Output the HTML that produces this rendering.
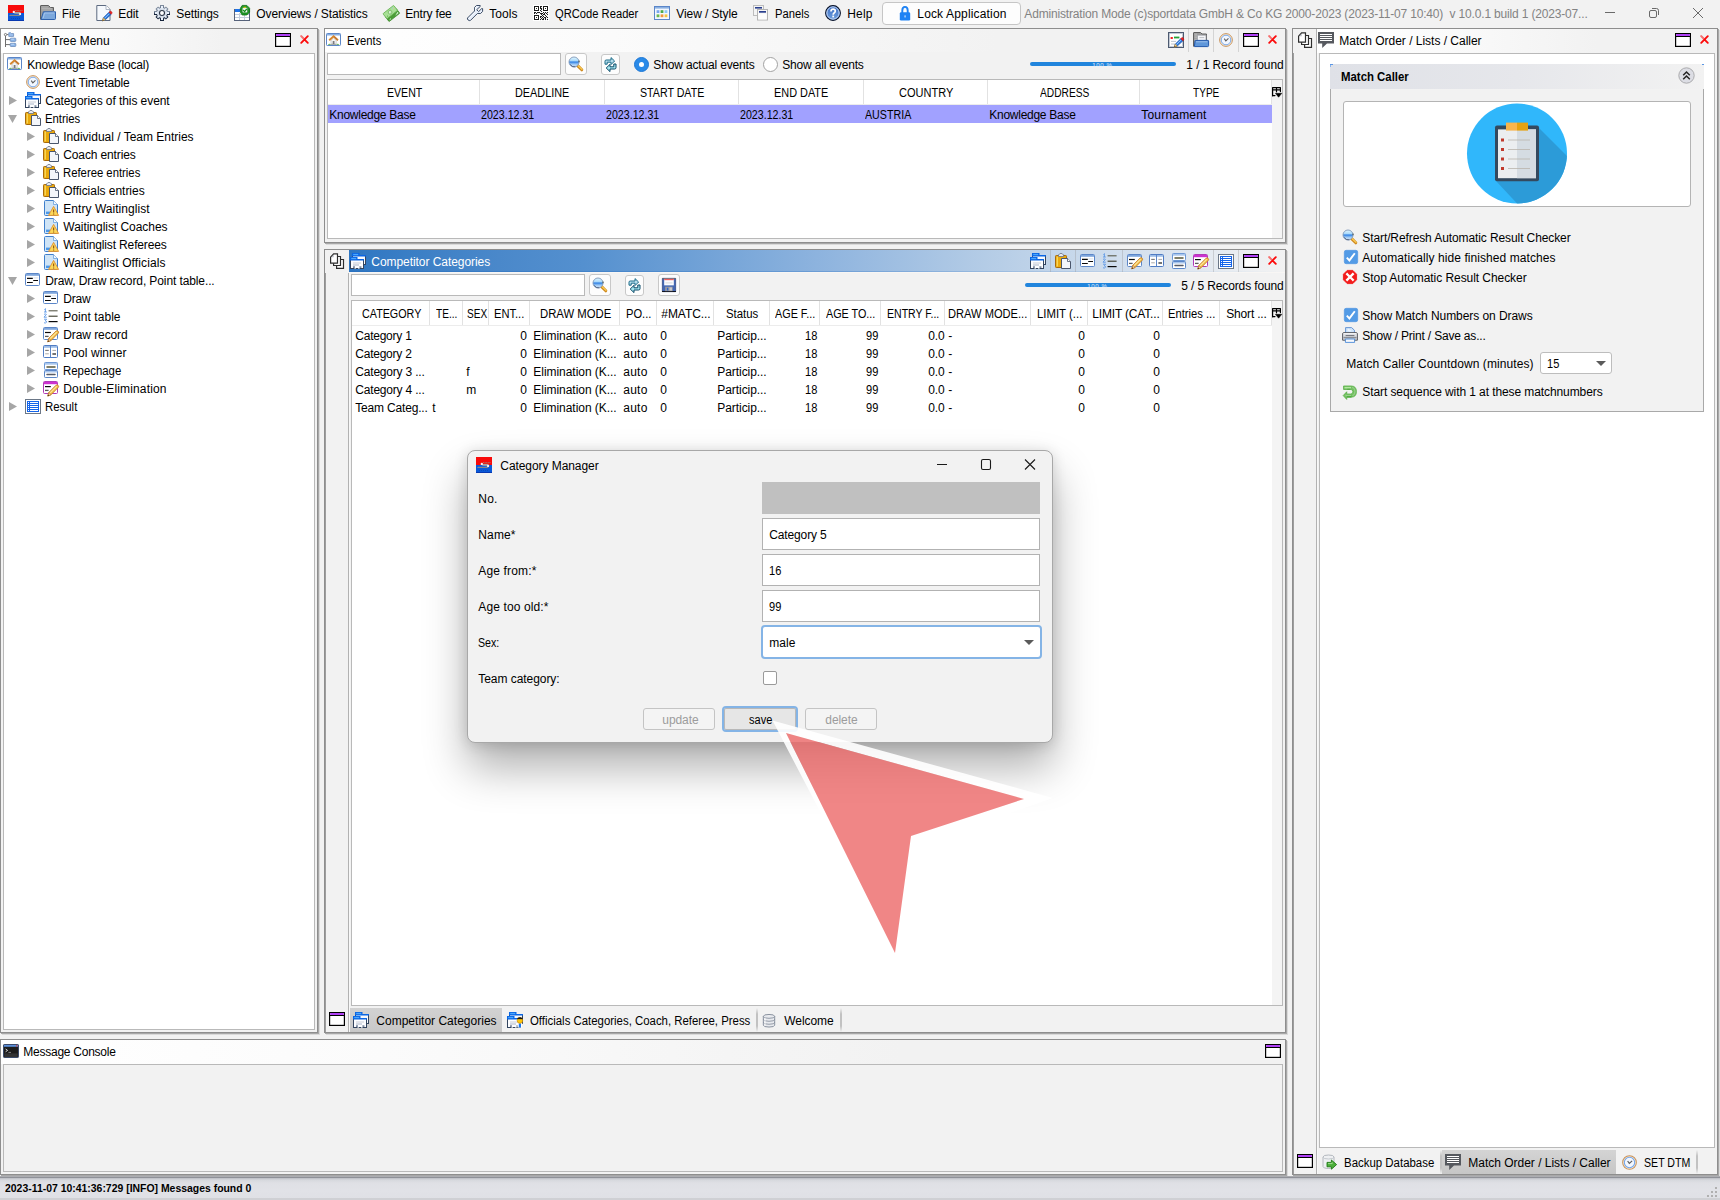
<!DOCTYPE html>
<html lang="en"><head><meta charset="utf-8"><title>Category Manager</title>
<style>
html,body{margin:0;padding:0;}
body{width:1720px;height:1200px;overflow:hidden;background:#f2f2f2;position:relative;font-family:"Liberation Sans",sans-serif;font-size:12px;color:#000;}
div{position:absolute;box-sizing:border-box;}
.t{position:absolute;white-space:pre;}
.i{position:absolute;}
.i svg{display:block;width:100%;height:100%;overflow:visible;}
.panel{border:1px solid #8e8e8e;box-shadow:1px 1px 0 #a8a8a8,2px 2px 0 #dadada;background:#f2f2f2;}
.tb{background:linear-gradient(90deg,#ffffff 0%,#fbfbfb 30%,#f2f2f2 70%,#f2f2f2 100%);}
.inset{border:1px solid #b9b9b9;background:#fff;}
.btn{border:1px solid #c8c8c8;border-radius:3px;background:#fdfdfd;}
.hsep{background:#e3e3e3;width:1px;}
.vsep{background:#d0d0d0;width:1px;}

</style></head>
<body>
<div class="i" style="left:8px;top:5px;width:16px;height:16px;"><svg viewBox="0 0 16 16" ><rect width="16" height="8" fill="#f80a0a"/><rect y="8" width="16" height="8" fill="#0a58d8"/><rect y="15" width="16" height="1" fill="#0838b0"/><path d="M7 5.5 H14.8" stroke="#a08478" stroke-width="0.8" stroke-dasharray="1.1 0.5"/><path d="M7.8 6.4 H13.7" stroke="#d83020" stroke-width="0.9"/><path d="M5.8 7.1 H11.6 Q13.2 7.6 12.8 8.8 L11.4 9.4 L6.6 8.7 Q4.8 8.2 5.8 7.1 Z" fill="#a8a0a0"/><ellipse cx="5.8" cy="6.9" rx="1.15" ry="1.2" fill="#f2f4f4"/><ellipse cx="12.1" cy="8.9" rx="1.1" ry="1.2" fill="#f6f2ee"/><path d="M2 9.3 H10.6" stroke="#2a6ad2" stroke-width="0.9"/><path d="M1.4 10.5 H12.2" stroke="#948c80" stroke-width="0.9"/><path d="M3 13.5 H12.4" stroke="#0a44b0" stroke-width="0.8" stroke-dasharray="0.9 1.1"/></svg></div><div class="i" style="left:40px;top:5px;width:16px;height:16px;"><svg viewBox="0 0 16 16" ><path d="M0.5 14.5 V1 Q0.5 0.5 1 0.5 H8.5 L10.5 2.5 H13.5 V6" fill="#9a9a9a" stroke="#5e5e5e"/><path d="M1.5 2 H8 M1.5 3.5 H12 M1.5 5 H12" stroke="#b9b9b9" stroke-width="0.8"/><path d="M1 14.5 L3.4 6.8 H15.5 V13.6 Q15.5 14.5 14.6 14.5 Z" fill="#7ba7dc" stroke="#2f62ae"/><path d="M3.2 13 L4.6 8 H14.3" fill="none" stroke="#a9c8ee" stroke-width="0.9"/></svg></div><span class="t" style="left:62.3px;top:5px;line-height:18px;transform:scaleX(0.9460);transform-origin:0 0;">File</span><div class="i" style="left:96px;top:5px;width:16px;height:16px;"><svg viewBox="0 0 16 16" ><path d="M0.8 0.5 H10 L14 4.5 V15.5 H0.8 Z" fill="#f6f9fd" stroke="#5d6a80"/><path d="M10 0.5 V4.5 H14" fill="#fff" stroke="#9aa4b6" stroke-width="0.8"/><g transform="translate(6.2,6.2) scale(1.05)"><path d="M0.3 9.2 L1.2 6.3 L6.5 1 L8.5 3 L3 8.1 Z" fill="#2a7de0" stroke="#1c55b0" stroke-width="0.8"/><path d="M6.5 1 L7.3 0.2 Q8 -0.3 8.9 0.5 Q9.7 1.4 9.1 2.2 L8.5 3 Z" fill="#ee2222" stroke="#c01010" stroke-width="0.6"/><path d="M0.3 9.2 L1.2 6.3 L3 8.1 Z" fill="#f7e3b0" stroke="#c08828" stroke-width="0.7"/><path d="M0.2 9.3 L0.8 8 L1.5 8.7 Z" fill="#3a2a10"/><path d="M2.4 6.6 L6.6 2.4" stroke="#9cc8ff" stroke-width="0.9"/></g></svg></div><span class="t" style="left:118.3px;top:5px;line-height:18px;letter-spacing:-0.097px;">Edit</span><div class="i" style="left:154px;top:5px;width:16px;height:16px;"><svg viewBox="0 0 16 16" ><defs><linearGradient id="gg" x1="0" y1="0" x2="0" y2="1"><stop offset="0" stop-color="#7d8a9c"/><stop offset="1" stop-color="#15233a"/></linearGradient></defs><g transform="translate(8,8)"><circle r="5.6" fill="#e4ecf6" stroke="url(#gg)" stroke-width="1"/><g fill="#eaf1fb" stroke="url(#gg)" stroke-width="1"><rect x="-1.5" y="-7.5" width="3" height="15"/><rect x="-7.5" y="-1.5" width="15" height="3"/><rect x="-1.4" y="-6.9" width="2.8" height="13.8" transform="rotate(45)"/><rect x="-1.4" y="-6.9" width="2.8" height="13.8" transform="rotate(-45)"/></g><circle r="5.1" fill="#e6edf7"/><circle r="3.9" fill="none" stroke="#c9d2de" stroke-width="0.8"/><circle r="2.5" fill="#fff" stroke="#2c3646" stroke-width="1.1"/></g></svg></div><span class="t" style="left:176.3px;top:5px;line-height:18px;letter-spacing:-0.132px;">Settings</span><div class="i" style="left:234px;top:5px;width:16px;height:16px;"><svg viewBox="0 0 16 16" ><rect x="0.5" y="4.5" width="15" height="11" fill="#fff" stroke="#56627a"/><rect x="1" y="4" width="5" height="3" fill="#1f73e8"/><path d="M1 9.5 H15 M1 12.5 H15 M5.5 8 V15 M10.5 9 V15" stroke="#c3cddc" stroke-width="1"/><path d="M8.2 0.4 H12.8 L15.6 3.2 V7.2 L12.8 10 H8.2 L6.4 7.2 V3.2 Z" fill="#1f9a26" stroke="#0f6e14" stroke-width="0.8"/><rect x="8.2" y="2.6" width="5.4" height="5.2" rx="1" fill="#f5fbf5" stroke="#0f6e14" stroke-width="0.6"/><rect x="9.6" y="1.8" width="2.4" height="1" fill="#f2c200"/><path d="M9.2 5 L10.6 6.6 L12.8 3.8" fill="none" stroke="#148a1c" stroke-width="1.3"/></svg></div><span class="t" style="left:256.3px;top:5px;line-height:18px;letter-spacing:-0.124px;">Overviews / Statistics</span><div class="i" style="left:383px;top:5px;width:16px;height:16px;"><svg viewBox="0 0 16 16" ><g transform="rotate(-38 8 8)"><rect x="1.2" y="7.4" width="13.6" height="6.2" rx="0.6" fill="#4a9c36" stroke="#3e8a2c" stroke-width="0.7"/><path d="M9.6 12.6 L14 11 V12.6 Z" fill="#d8f6d4"/><path d="M2 12.8 L4.4 11.6 L4.4 12.8 Z" fill="#c8f0c0"/><rect x="1.2" y="3.6" width="13.6" height="6.4" rx="0.6" fill="#a8e096" stroke="#6ab456" stroke-width="0.8"/><circle cx="7.8" cy="6.8" r="2" fill="#8cc87c" stroke="#7ab86a" stroke-width="0.5"/><circle cx="7.8" cy="6.8" r="1.15" fill="#f4fcf2"/><circle cx="7.9" cy="6.8" r="0.45" fill="#62b04e"/><circle cx="3.4" cy="8.4" r="0.55" fill="#5aa848"/><circle cx="12.2" cy="5" r="0.55" fill="#9cc8e0"/><circle cx="13.2" cy="6.2" r="0.5" fill="#e8c0a0"/></g></svg></div><span class="t" style="left:405.3px;top:5px;line-height:18px;letter-spacing:-0.192px;">Entry fee</span><div class="i" style="left:467px;top:5px;width:16px;height:16px;"><svg viewBox="0 0 16 16" ><path d="M0.5 13 L7.5 6 V2.4 L9.5 0.5 H13.2 V1.5 L9.7 4.7 L11.6 6.6 L14.7 3.6 H15.6 V6.4 L13.6 8.5 H10.4 L3.5 15.4 Q2.2 16 1.1 15 Q0.1 14 0.5 13 Z" fill="#e8effb" stroke="#34455f" stroke-width="0.95" stroke-linejoin="round"/><path d="M1.6 13.4 L8.2 6.8" stroke="#fff" stroke-width="1" stroke-dasharray="1 0.6"/><path d="M8.4 5.4 V2.8 L9.8 1.4" fill="none" stroke="#fff" stroke-width="0.8"/></svg></div><span class="t" style="left:489.3px;top:5px;line-height:18px;letter-spacing:0.057px;">Tools</span><div class="i" style="left:533px;top:5px;width:16px;height:16px;"><svg viewBox="0 0 16 16" ><rect x="0" y="0" width="16" height="16" fill="#fff"/><rect x="1.5" y="1.5" width="4" height="4" fill="#fff" stroke="#1a1a1a" stroke-width="1"/><rect x="3" y="3" width="1" height="1" fill="#2a2a1a"/><rect x="10.5" y="1.5" width="4" height="4" fill="#fff" stroke="#1a1a1a" stroke-width="1"/><rect x="12" y="3" width="1" height="1" fill="#2a2a1a"/><rect x="1.5" y="10.5" width="4" height="4" fill="#fff" stroke="#1a1a1a" stroke-width="1"/><rect x="3" y="12" width="1" height="1" fill="#2a2a1a"/><rect x="7" y="1" width="1.05" height="1.05" fill="#1c1c1c"/><rect x="8" y="1" width="1.05" height="1.05" fill="#1c1c1c"/><rect x="7" y="2" width="1.05" height="1.05" fill="#1c1c1c"/><rect x="7" y="3" width="1.05" height="1.05" fill="#1c1c1c"/><rect x="8" y="3" width="1.05" height="1.05" fill="#1c1c1c"/><rect x="8" y="4" width="1.05" height="1.05" fill="#1c1c1c"/><rect x="7" y="5" width="1.05" height="1.05" fill="#1c1c1c"/><rect x="8" y="6" width="1.05" height="1.05" fill="#1c1c1c"/><rect x="1" y="7" width="1.05" height="1.05" fill="#1c1c1c"/><rect x="2" y="7" width="1.05" height="1.05" fill="#1c1c1c"/><rect x="4" y="7" width="1.05" height="1.05" fill="#1c1c1c"/><rect x="5" y="7" width="1.05" height="1.05" fill="#1c1c1c"/><rect x="6" y="7" width="1.05" height="1.05" fill="#1c1c1c"/><rect x="1" y="8" width="1.05" height="1.05" fill="#1c1c1c"/><rect x="3" y="8" width="1.05" height="1.05" fill="#1c1c1c"/><rect x="7" y="8" width="1.05" height="1.05" fill="#1c1c1c"/><rect x="8" y="8" width="1.05" height="1.05" fill="#1c1c1c"/><rect x="10" y="7" width="1.05" height="1.05" fill="#1c1c1c"/><rect x="12" y="7" width="1.05" height="1.05" fill="#1c1c1c"/><rect x="14" y="7" width="1.05" height="1.05" fill="#1c1c1c"/><rect x="9" y="8" width="1.05" height="1.05" fill="#1c1c1c"/><rect x="11" y="8" width="1.05" height="1.05" fill="#1c1c1c"/><rect x="13" y="8" width="1.05" height="1.05" fill="#1c1c1c"/><rect x="8" y="9" width="1.05" height="1.05" fill="#1c1c1c"/><rect x="10" y="9" width="1.05" height="1.05" fill="#1c1c1c"/><rect x="11" y="9" width="1.05" height="1.05" fill="#1c1c1c"/><rect x="14" y="9" width="1.05" height="1.05" fill="#1c1c1c"/><rect x="9" y="10" width="1.05" height="1.05" fill="#1c1c1c"/><rect x="12" y="10" width="1.05" height="1.05" fill="#1c1c1c"/><rect x="7" y="11" width="1.05" height="1.05" fill="#1c1c1c"/><rect x="8" y="11" width="1.05" height="1.05" fill="#1c1c1c"/><rect x="10" y="11" width="1.05" height="1.05" fill="#1c1c1c"/><rect x="13" y="11" width="1.05" height="1.05" fill="#1c1c1c"/><rect x="7" y="12" width="1.05" height="1.05" fill="#1c1c1c"/><rect x="9" y="12" width="1.05" height="1.05" fill="#1c1c1c"/><rect x="11" y="12" width="1.05" height="1.05" fill="#1c1c1c"/><rect x="12" y="12" width="1.05" height="1.05" fill="#1c1c1c"/><rect x="14" y="12" width="1.05" height="1.05" fill="#1c1c1c"/><rect x="8" y="13" width="1.05" height="1.05" fill="#1c1c1c"/><rect x="10" y="13" width="1.05" height="1.05" fill="#1c1c1c"/><rect x="12" y="13" width="1.05" height="1.05" fill="#1c1c1c"/><rect x="7" y="14" width="1.05" height="1.05" fill="#1c1c1c"/><rect x="9" y="14" width="1.05" height="1.05" fill="#1c1c1c"/><rect x="10" y="14" width="1.05" height="1.05" fill="#1c1c1c"/><rect x="12" y="14" width="1.05" height="1.05" fill="#1c1c1c"/><rect x="14" y="14" width="1.05" height="1.05" fill="#1c1c1c"/></svg></div><span class="t" style="left:555.3px;top:5px;line-height:18px;transform:scaleX(0.9319);transform-origin:0 0;">QRCode Reader</span><div class="i" style="left:654px;top:5px;width:16px;height:16px;"><svg viewBox="0 0 16 16" ><rect x="0.5" y="1.5" width="15" height="13" fill="#f3f7fd" stroke="#5b86c8"/><rect x="1" y="2" width="14" height="1.6" fill="#8ab0e2"/><rect x="2.6" y="5.2" width="2.8" height="2.8" fill="#7aa6ee"/><rect x="6.6" y="5.2" width="2.8" height="2.8" fill="#4caa48"/><rect x="10.6" y="5.2" width="2.8" height="2.8" fill="#8ccaf6"/><rect x="2.6" y="9.4" width="2.8" height="2.8" fill="#6cb84e"/><rect x="6.6" y="9.4" width="2.8" height="2.8" fill="#f2963c"/><rect x="10.6" y="9.4" width="2.8" height="2.8" fill="#f4c63c"/></svg></div><span class="t" style="left:676.3px;top:5px;line-height:18px;letter-spacing:-0.099px;">View / Style</span><div class="i" style="left:753px;top:5px;width:16px;height:16px;"><svg viewBox="0 0 16 16" ><rect x="0.5" y="0.5" width="10" height="10" fill="#f4f4f4" stroke="#bdbdbd"/><rect x="2" y="2" width="7" height="1.6" fill="#2a3f8e"/><rect x="4.5" y="4.5" width="10" height="10.5" fill="#f6f6f6" stroke="#b4b4b4"/><rect x="6" y="6" width="7" height="1.7" fill="#2a3f8e"/><rect x="5.5" y="9" width="8" height="5.4" fill="#fdfdfd"/></svg></div><span class="t" style="left:775.3px;top:5px;line-height:18px;transform:scaleX(0.9345);transform-origin:0 0;">Panels</span><div class="i" style="left:825px;top:5px;width:16px;height:16px;"><svg viewBox="0 0 16 16" ><defs><linearGradient id="hg" x1="0" y1="0" x2="0" y2="1"><stop offset="0" stop-color="#3f70c4"/><stop offset="1" stop-color="#6c9cdc"/></linearGradient></defs><circle cx="8" cy="8" r="7.4" fill="#2f62c0" stroke="#0c1426" stroke-width="1.1"/><circle cx="8" cy="8" r="6.2" fill="url(#hg)" stroke="#dbe9fb" stroke-width="0.9"/><path d="M6 6.4 Q6 4.2 8.2 4.2 Q10.3 4.2 10.3 6 Q10.3 7.2 9.1 7.9 Q8.2 8.4 8.2 9.7" fill="none" stroke="#fff" stroke-width="1.7"/><rect x="7.3" y="10.6" width="1.8" height="1.8" fill="#fff"/></svg></div><span class="t" style="left:847.3px;top:5px;line-height:18px;letter-spacing:0.153px;">Help</span><div style="left:882px;top:2px;width:139px;height:23px;border:1px solid #c6c6c6;border-radius:4px;background:#fdfdfd;"></div><div class="i" style="left:899px;top:6px;width:12px;height:15px;"><svg viewBox="0 0 12 15" ><path d="M3.3 7.4 V4.6 Q3.3 0.9 6 0.9 Q8.7 0.9 8.7 4.6 V7.4" fill="none" stroke="#1e82f4" stroke-width="1.9"/><rect x="0.8" y="6.2" width="10.4" height="8.4" rx="1.3" fill="#1e82f4"/><rect x="5.5" y="9.2" width="1.1" height="2.4" rx="0.5" fill="#dcecff"/></svg></div><span class="t" style="left:917.3px;top:5px;line-height:18px;letter-spacing:0.160px;">Lock Application</span><span class="t" style="left:1024.3px;top:5px;line-height:18px;color:#838383;letter-spacing:-0.168px;">Administration Mode (c)sportdata GmbH &amp; Co KG 2000-2023 (2023-11-07 10:40)  v 10.0.1 build 1 (2023-07...</span><svg class="i" style="left:1600px;top:4px;width:120px;height:20px" viewBox="0 0 120 20"><path d="M5 8.5 H15" stroke="#6a6a6a" stroke-width="1" fill="none"/><rect x="49.5" y="6.5" width="7" height="7" rx="1.5" fill="none" stroke="#6a6a6a"/><path d="M52 4.5 H56.5 Q58.5 4.5 58.5 6.5 V11" fill="none" stroke="#6a6a6a"/><path d="M93 4 L103 14 M103 4 L93 14" stroke="#6a6a6a" stroke-width="1" fill="none"/></svg><div class="panel" style="left:0px;top:28px;width:318px;height:1005px;"></div><div class="tb" style="left:1px;top:29px;width:316px;height:24px;"></div><div class="i" style="left:4px;top:32px;width:13px;height:16px;"><svg viewBox="0 0 13 16" ><path d="M1.5 4 V15 M1.5 7.6 H6 M1.5 12.6 H6 M2.8 2.6 H4.6" fill="none" stroke="#6e6e6e" stroke-width="1"/><circle cx="1.5" cy="2.6" r="1.15" fill="#fff" stroke="#6e6e6e" stroke-width="0.9"/><path d="M4.8 4.4 V0.8 H6.8 L7.6 1.6 H9.6 V4.4 Z" fill="#9cc0ee" stroke="#6c8cba" stroke-width="0.8"/><rect x="6.2" y="6.2" width="5.6" height="3.2" rx="0.7" fill="#8cb6ea" stroke="#6c8cba" stroke-width="0.8"/><rect x="6.2" y="11.3" width="5.6" height="3.2" rx="0.7" fill="#8cb6ea" stroke="#6c8cba" stroke-width="0.8"/><path d="M7.2 7.2 H10 M7.2 12.3 H10" stroke="#c4dcf8" stroke-width="0.8"/></svg></div><span class="t" style="left:23.3px;top:32px;line-height:18px;letter-spacing:-0.030px;">Main Tree Menu</span><div class="i" style="left:275px;top:33px;width:16px;height:14px;"><svg viewBox="0 0 16 14" ><rect x="0" y="0" width="16" height="14" fill="#000"/><rect x="1.2" y="1" width="13.6" height="11.8" fill="#fff"/><rect x="1.2" y="1" width="13.6" height="2" fill="#b040f6"/><rect x="1" y="3" width="14" height="1" fill="#000"/></svg></div><div class="i" style="left:300px;top:35px;width:9px;height:9px;"><svg viewBox="0 0 9 9" ><path d="M1.2 1.2 L7.8 7.8 M7.8 1.2 L1.2 7.8" stroke="#fc0a0a" stroke-width="1.9" stroke-linecap="round"/><path d="M1.2 1.2 L3.4 3.4" stroke="#f0f0f0" stroke-opacity="0.45" stroke-width="2" stroke-linecap="round"/></svg></div><div class="inset" style="left:3px;top:53px;width:312px;height:977px;"></div><div class="i" style="left:7px;top:56px;width:16px;height:16px;"><svg viewBox="0 0 16 16" ><rect x="0.5" y="1.5" width="14" height="12" rx="0.8" fill="#fff" stroke="#5b86c8"/><rect x="1" y="2" width="13" height="1.5" fill="#8ab0e2"/><path d="M5 8.4 L7.6 6 L10.2 8.4 V12 H5 Z" fill="#f6f6f6" stroke="#a4a4a4" stroke-width="0.5"/><path d="M3.2 8.2 L7.6 4.2 L12 8.2" fill="none" stroke="#d6862e" stroke-width="1.9" stroke-linejoin="miter"/><path d="M8.4 4.9 L11.6 7.8" fill="none" stroke="#b06a3a" stroke-width="0.9"/><rect x="6.7" y="9" width="1.8" height="3" fill="#7c7c7c"/><path d="M2 12.4 Q3.4 11 4.8 12.2 V12.8 H2 Z M10.4 12.2 Q11.8 11 13.2 12.4 V12.8 H10.4 Z" fill="#46a636"/><path d="M4.8 12.5 H10.4" stroke="#8c8c8c" stroke-width="0.7"/></svg></div><span class="t" style="left:27.3px;top:56px;line-height:18px;letter-spacing:-0.194px;">Knowledge Base (local)</span><div class="i" style="left:26px;top:75px;width:14px;height:14px;"><svg viewBox="0 0 16 16" ><circle cx="8" cy="8" r="7.3" fill="#f6ead6" stroke="#c8925a" stroke-width="1.1"/><circle cx="8" cy="8" r="5.5" fill="#f2f7ff" stroke="#74a6ea" stroke-width="1.1"/><path d="M6 6.4 L7.8 9 L10.8 6.2" fill="none" stroke="#5e5e5e" stroke-width="1.25" stroke-linejoin="miter"/></svg></div><span class="t" style="left:45.3px;top:74px;line-height:18px;letter-spacing:-0.116px;">Event Timetable</span><div class="i" style="left:25px;top:92px;width:16px;height:16px;"><svg viewBox="0 0 16 16" ><rect x="2.5" y="2.5" width="13" height="9" fill="#f6f9fd" stroke="#33445e"/><path d="M2 0 H9.5 V2 H16 V3.6 H2 Z" fill="#0b66e4"/><rect x="3.2" y="0.9" width="5" height="1.3" fill="#4aa8ff"/><rect x="0.5" y="6.5" width="13" height="9" fill="#fcfdff" stroke="#33445e"/><path d="M0 4 H7.5 V6 H14 V7.6 H0 Z" fill="#0b66e4"/><rect x="1.2" y="4.9" width="5" height="1.3" fill="#4aa8ff"/><path d="M3 10 H11" stroke="#c8ccd6" stroke-width="1"/><path d="M3 12 H9" stroke="#aab4c6" stroke-width="1"/><rect x="3" y="13.4" width="2" height="1.4" fill="#5e6e88"/><rect x="9.4" y="13.4" width="2" height="1.4" fill="#5e6e88"/><rect x="4.6" y="14.6" width="1" height="1.4" fill="#fff"/><rect x="8.4" y="14.6" width="1" height="1.4" fill="#fff"/></svg></div><span class="t" style="left:45.3px;top:92px;line-height:18px;letter-spacing:-0.074px;">Categories of this event</span><svg class="i" style="left:9px;top:96px;width:8px;height:9px" viewBox="0 0 8 9"><path d="M0 0 L8 4.5 L0 9 Z" fill="#a6a6a6"/></svg><div class="i" style="left:25px;top:110px;width:16px;height:16px;"><svg viewBox="0 0 16 16" ><rect x="0.5" y="2.5" width="11" height="12" rx="0.8" fill="#eaa90c" stroke="#a8690a"/><rect x="1.6" y="3.6" width="1.4" height="9.8" fill="#f8d458"/><path d="M3.5 3.5 V2 Q3.5 1.5 4.2 1.5 Q4.5 0.4 6 0.4 Q7.5 0.4 7.8 1.5 Q8.5 1.5 8.5 2 V3.5 Z" fill="#e8eaee" stroke="#6a7486" stroke-width="0.8"/><path d="M6.5 5.5 H12.5 L15.5 8.5 V15.5 H6.5 Z" fill="#f4f6fa" stroke="#4a566c"/><path d="M12.5 5.5 V8.5 H15.5" fill="#fff" stroke="#4a566c" stroke-width="0.8"/></svg></div><span class="t" style="left:45.3px;top:110px;line-height:18px;transform:scaleX(0.9449);transform-origin:0 0;">Entries</span><svg class="i" style="left:8px;top:115px;width:9px;height:8px" viewBox="0 0 9 8"><path d="M0 0 H9 L4.5 8 Z" fill="#a6a6a6"/></svg><div class="i" style="left:43px;top:128px;width:16px;height:16px;"><svg viewBox="0 0 16 16" ><rect x="0.5" y="2.5" width="11" height="12" rx="0.8" fill="#eaa90c" stroke="#a8690a"/><rect x="1.6" y="3.6" width="1.4" height="9.8" fill="#f8d458"/><path d="M3.5 3.5 V2 Q3.5 1.5 4.2 1.5 Q4.5 0.4 6 0.4 Q7.5 0.4 7.8 1.5 Q8.5 1.5 8.5 2 V3.5 Z" fill="#e8eaee" stroke="#6a7486" stroke-width="0.8"/><path d="M6.5 5.5 H12.5 L15.5 8.5 V15.5 H6.5 Z" fill="#f4f6fa" stroke="#4a566c"/><path d="M12.5 5.5 V8.5 H15.5" fill="#fff" stroke="#4a566c" stroke-width="0.8"/></svg></div><span class="t" style="left:63.3px;top:128px;line-height:18px;letter-spacing:-0.009px;">Individual / Team Entries</span><svg class="i" style="left:27px;top:132px;width:8px;height:9px" viewBox="0 0 8 9"><path d="M0 0 L8 4.5 L0 9 Z" fill="#a6a6a6"/></svg><div class="i" style="left:43px;top:146px;width:16px;height:16px;"><svg viewBox="0 0 16 16" ><rect x="0.5" y="2.5" width="11" height="12" rx="0.8" fill="#eaa90c" stroke="#a8690a"/><rect x="1.6" y="3.6" width="1.4" height="9.8" fill="#f8d458"/><path d="M3.5 3.5 V2 Q3.5 1.5 4.2 1.5 Q4.5 0.4 6 0.4 Q7.5 0.4 7.8 1.5 Q8.5 1.5 8.5 2 V3.5 Z" fill="#e8eaee" stroke="#6a7486" stroke-width="0.8"/><path d="M6.5 5.5 H12.5 L15.5 8.5 V15.5 H6.5 Z" fill="#f4f6fa" stroke="#4a566c"/><path d="M12.5 5.5 V8.5 H15.5" fill="#fff" stroke="#4a566c" stroke-width="0.8"/></svg></div><span class="t" style="left:63.3px;top:146px;line-height:18px;letter-spacing:-0.134px;">Coach entries</span><svg class="i" style="left:27px;top:150px;width:8px;height:9px" viewBox="0 0 8 9"><path d="M0 0 L8 4.5 L0 9 Z" fill="#a6a6a6"/></svg><div class="i" style="left:43px;top:164px;width:16px;height:16px;"><svg viewBox="0 0 16 16" ><rect x="0.5" y="2.5" width="11" height="12" rx="0.8" fill="#eaa90c" stroke="#a8690a"/><rect x="1.6" y="3.6" width="1.4" height="9.8" fill="#f8d458"/><path d="M3.5 3.5 V2 Q3.5 1.5 4.2 1.5 Q4.5 0.4 6 0.4 Q7.5 0.4 7.8 1.5 Q8.5 1.5 8.5 2 V3.5 Z" fill="#e8eaee" stroke="#6a7486" stroke-width="0.8"/><path d="M6.5 5.5 H12.5 L15.5 8.5 V15.5 H6.5 Z" fill="#f4f6fa" stroke="#4a566c"/><path d="M12.5 5.5 V8.5 H15.5" fill="#fff" stroke="#4a566c" stroke-width="0.8"/></svg></div><span class="t" style="left:63.3px;top:164px;line-height:18px;transform:scaleX(0.9421);transform-origin:0 0;">Referee entries</span><svg class="i" style="left:27px;top:168px;width:8px;height:9px" viewBox="0 0 8 9"><path d="M0 0 L8 4.5 L0 9 Z" fill="#a6a6a6"/></svg><div class="i" style="left:43px;top:182px;width:16px;height:16px;"><svg viewBox="0 0 16 16" ><rect x="0.5" y="2.5" width="11" height="12" rx="0.8" fill="#eaa90c" stroke="#a8690a"/><rect x="1.6" y="3.6" width="1.4" height="9.8" fill="#f8d458"/><path d="M3.5 3.5 V2 Q3.5 1.5 4.2 1.5 Q4.5 0.4 6 0.4 Q7.5 0.4 7.8 1.5 Q8.5 1.5 8.5 2 V3.5 Z" fill="#e8eaee" stroke="#6a7486" stroke-width="0.8"/><path d="M6.5 5.5 H12.5 L15.5 8.5 V15.5 H6.5 Z" fill="#f4f6fa" stroke="#4a566c"/><path d="M12.5 5.5 V8.5 H15.5" fill="#fff" stroke="#4a566c" stroke-width="0.8"/></svg></div><span class="t" style="left:63.3px;top:182px;line-height:18px;letter-spacing:-0.030px;">Officials entries</span><svg class="i" style="left:27px;top:186px;width:8px;height:9px" viewBox="0 0 8 9"><path d="M0 0 L8 4.5 L0 9 Z" fill="#a6a6a6"/></svg><div class="i" style="left:43px;top:200px;width:16px;height:16px;"><svg viewBox="0 0 16 16" ><path d="M1.5 1.5 Q1.5 0.5 2.5 0.5 H10.5 L14.5 4.5 V14.5 Q14.5 15.5 13.5 15.5 H2.5 Q1.5 15.5 1.5 14.5 Z" fill="#cfe4f6" stroke="#3f7fcc"/><path d="M10.5 0.5 V4.5 H14.5" fill="#f4f9fe" stroke="#6aa0dc" stroke-width="0.8"/><rect x="3" y="11.6" width="4" height="2.4" fill="#4a98ea"/><path d="M10.6 6.4 L15.6 15.4 H5.6 Z" fill="#fbd85a" stroke="#e18f2c" stroke-width="0.9" stroke-linejoin="round"/><path d="M10.6 9.4 V12.4 M10.6 13.4 V14.4" stroke="#9a5a10" stroke-width="1.2"/></svg></div><span class="t" style="left:63.3px;top:200px;line-height:18px;letter-spacing:0.042px;">Entry Waitinglist</span><svg class="i" style="left:27px;top:204px;width:8px;height:9px" viewBox="0 0 8 9"><path d="M0 0 L8 4.5 L0 9 Z" fill="#a6a6a6"/></svg><div class="i" style="left:43px;top:218px;width:16px;height:16px;"><svg viewBox="0 0 16 16" ><path d="M1.5 1.5 Q1.5 0.5 2.5 0.5 H10.5 L14.5 4.5 V14.5 Q14.5 15.5 13.5 15.5 H2.5 Q1.5 15.5 1.5 14.5 Z" fill="#cfe4f6" stroke="#3f7fcc"/><path d="M10.5 0.5 V4.5 H14.5" fill="#f4f9fe" stroke="#6aa0dc" stroke-width="0.8"/><rect x="3" y="11.6" width="4" height="2.4" fill="#4a98ea"/><path d="M10.6 6.4 L15.6 15.4 H5.6 Z" fill="#fbd85a" stroke="#e18f2c" stroke-width="0.9" stroke-linejoin="round"/><path d="M10.6 9.4 V12.4 M10.6 13.4 V14.4" stroke="#9a5a10" stroke-width="1.2"/></svg></div><span class="t" style="left:63.3px;top:218px;line-height:18px;letter-spacing:-0.034px;">Waitinglist Coaches</span><svg class="i" style="left:27px;top:222px;width:8px;height:9px" viewBox="0 0 8 9"><path d="M0 0 L8 4.5 L0 9 Z" fill="#a6a6a6"/></svg><div class="i" style="left:43px;top:236px;width:16px;height:16px;"><svg viewBox="0 0 16 16" ><path d="M1.5 1.5 Q1.5 0.5 2.5 0.5 H10.5 L14.5 4.5 V14.5 Q14.5 15.5 13.5 15.5 H2.5 Q1.5 15.5 1.5 14.5 Z" fill="#cfe4f6" stroke="#3f7fcc"/><path d="M10.5 0.5 V4.5 H14.5" fill="#f4f9fe" stroke="#6aa0dc" stroke-width="0.8"/><rect x="3" y="11.6" width="4" height="2.4" fill="#4a98ea"/><path d="M10.6 6.4 L15.6 15.4 H5.6 Z" fill="#fbd85a" stroke="#e18f2c" stroke-width="0.9" stroke-linejoin="round"/><path d="M10.6 9.4 V12.4 M10.6 13.4 V14.4" stroke="#9a5a10" stroke-width="1.2"/></svg></div><span class="t" style="left:63.3px;top:236px;line-height:18px;letter-spacing:-0.148px;">Waitinglist Referees</span><svg class="i" style="left:27px;top:240px;width:8px;height:9px" viewBox="0 0 8 9"><path d="M0 0 L8 4.5 L0 9 Z" fill="#a6a6a6"/></svg><div class="i" style="left:43px;top:254px;width:16px;height:16px;"><svg viewBox="0 0 16 16" ><path d="M1.5 1.5 Q1.5 0.5 2.5 0.5 H10.5 L14.5 4.5 V14.5 Q14.5 15.5 13.5 15.5 H2.5 Q1.5 15.5 1.5 14.5 Z" fill="#cfe4f6" stroke="#3f7fcc"/><path d="M10.5 0.5 V4.5 H14.5" fill="#f4f9fe" stroke="#6aa0dc" stroke-width="0.8"/><rect x="3" y="11.6" width="4" height="2.4" fill="#4a98ea"/><path d="M10.6 6.4 L15.6 15.4 H5.6 Z" fill="#fbd85a" stroke="#e18f2c" stroke-width="0.9" stroke-linejoin="round"/><path d="M10.6 9.4 V12.4 M10.6 13.4 V14.4" stroke="#9a5a10" stroke-width="1.2"/></svg></div><span class="t" style="left:63.3px;top:254px;line-height:18px;letter-spacing:0.108px;">Waitinglist Officials</span><svg class="i" style="left:27px;top:258px;width:8px;height:9px" viewBox="0 0 8 9"><path d="M0 0 L8 4.5 L0 9 Z" fill="#a6a6a6"/></svg><div class="i" style="left:25px;top:272px;width:16px;height:16px;"><svg viewBox="0 0 16 16" ><rect x="0.5" y="1.5" width="14" height="12" rx="1" fill="#fff" stroke="#5b86c8"/><rect x="1" y="2" width="13" height="1.8" fill="#7ea6dc"/><rect x="8.4" y="5" width="4.8" height="1.6" fill="#e6ecf4"/><path d="M2 6.4 H7.8 M8.2 8.5 H13 M2 10.5 H7.8" stroke="#0a0a0a" stroke-width="1.1"/></svg></div><span class="t" style="left:45.3px;top:272px;line-height:18px;letter-spacing:-0.104px;">Draw, Draw record, Point table...</span><svg class="i" style="left:8px;top:277px;width:9px;height:8px" viewBox="0 0 9 8"><path d="M0 0 H9 L4.5 8 Z" fill="#a6a6a6"/></svg><div class="i" style="left:43px;top:290px;width:16px;height:16px;"><svg viewBox="0 0 16 16" ><rect x="0.5" y="1.5" width="14" height="12" rx="1" fill="#fff" stroke="#5b86c8"/><rect x="1" y="2" width="13" height="1.8" fill="#7ea6dc"/><rect x="8.4" y="5" width="4.8" height="1.6" fill="#e6ecf4"/><path d="M2 6.4 H7.8 M8.2 8.5 H13 M2 10.5 H7.8" stroke="#0a0a0a" stroke-width="1.1"/></svg></div><span class="t" style="left:63.3px;top:290px;line-height:18px;letter-spacing:-0.179px;">Draw</span><svg class="i" style="left:27px;top:294px;width:8px;height:9px" viewBox="0 0 8 9"><path d="M0 0 L8 4.5 L0 9 Z" fill="#a6a6a6"/></svg><div class="i" style="left:43px;top:308px;width:16px;height:16px;"><svg viewBox="0 0 16 16" ><path d="M5.6 2.8 H14.6" stroke="#5a5a4a" stroke-width="1.1"/><path d="M5.6 8.2 H14.6" stroke="#3a3a2a" stroke-width="1.1"/><path d="M5.6 13.6 H14.6" stroke="#0a0a0a" stroke-width="1.2"/><path d="M1.4 1.6 L2.4 0.6 V4 M1 4 H3.8 M1 6.4 Q2.4 5.4 3.4 6.4 L1 9.2 H3.8 M1 11.2 H3.6 L2.2 12.8 Q3.8 13 3.6 14.2 Q3.2 15.4 1 14.8" fill="none" stroke="#5a96e6" stroke-width="0.9"/></svg></div><span class="t" style="left:63.3px;top:308px;line-height:18px;letter-spacing:0.053px;">Point table</span><svg class="i" style="left:27px;top:312px;width:8px;height:9px" viewBox="0 0 8 9"><path d="M0 0 L8 4.5 L0 9 Z" fill="#a6a6a6"/></svg><div class="i" style="left:43px;top:326px;width:16px;height:16px;"><svg viewBox="0 0 16 16" ><rect x="0.5" y="1.5" width="14" height="12" rx="1" fill="#fff" stroke="#5b86c8"/><rect x="1" y="2" width="13" height="1.8" fill="#7ea6dc"/><path d="M2 6.5 H7.8" stroke="#0a0a0a" stroke-width="1.2"/><path d="M2 10.4 H5.6" stroke="#5a5a5a" stroke-width="1.3"/><g transform="translate(4.4,4.6) scale(1.22)"><path d="M0.3 9.2 L1.2 6.3 L7.2 0.3 Q8 -0.3 8.8 0.5 Q9.6 1.3 8.9 2.1 L3 8.1 Z" fill="#f4c24a" stroke="#c8822a" stroke-width="0.8"/><path d="M0.3 9.2 L1.2 6.3 L3 8.1 Z" fill="#f3dcb4" stroke="#b8722a" stroke-width="0.6"/><path d="M0.2 9.3 L0.8 8 L1.5 8.7 Z" fill="#3a2a10"/><path d="M2.2 6.6 L7.6 1.2" stroke="#fbe6a0" stroke-width="0.9"/></g></svg></div><span class="t" style="left:63.3px;top:326px;line-height:18px;letter-spacing:-0.096px;">Draw record</span><svg class="i" style="left:27px;top:330px;width:8px;height:9px" viewBox="0 0 8 9"><path d="M0 0 L8 4.5 L0 9 Z" fill="#a6a6a6"/></svg><div class="i" style="left:43px;top:344px;width:16px;height:16px;"><svg viewBox="0 0 16 16" ><rect x="0.5" y="1.5" width="14" height="12" rx="1" fill="#fff" stroke="#4f7cc4"/><rect x="1" y="2" width="13" height="1.8" fill="#9dbde8"/><path d="M7.5 2 V13.5" stroke="#5b86c8" stroke-width="1"/><path d="M2.2 6.4 H5.8" stroke="#777" stroke-width="1.1"/><path d="M2.2 9.8 H5.8" stroke="#aaa" stroke-width="1"/><path d="M9.4 6.4 H13" stroke="#aaa" stroke-width="1"/><path d="M9.4 10 H13" stroke="#444" stroke-width="1.5"/></svg></div><span class="t" style="left:63.3px;top:344px;line-height:18px;letter-spacing:0.054px;">Pool winner</span><svg class="i" style="left:27px;top:348px;width:8px;height:9px" viewBox="0 0 8 9"><path d="M0 0 L8 4.5 L0 9 Z" fill="#a6a6a6"/></svg><div class="i" style="left:43px;top:362px;width:16px;height:16px;"><svg viewBox="0 0 16 16" ><rect x="1.5" y="0.5" width="13" height="7" rx="0.8" fill="#fff" stroke="#6c98d6"/><rect x="2" y="1" width="12" height="1.7" fill="#a9c6ec"/><rect x="1.5" y="8.5" width="13" height="7" rx="0.8" fill="#fff" stroke="#5b86c8"/><rect x="2" y="9" width="12" height="1.5" fill="#a9c6ec"/><path d="M4 5 H12" stroke="#55553a" stroke-width="1.5" stroke-linecap="round"/><path d="M4 12.6 H12" stroke="#555a66" stroke-width="1.5" stroke-linecap="round"/></svg></div><span class="t" style="left:63.3px;top:362px;line-height:18px;transform:scaleX(0.9497);transform-origin:0 0;">Repechage</span><svg class="i" style="left:27px;top:366px;width:8px;height:9px" viewBox="0 0 8 9"><path d="M0 0 L8 4.5 L0 9 Z" fill="#a6a6a6"/></svg><div class="i" style="left:43px;top:380px;width:16px;height:16px;"><svg viewBox="0 0 16 16" ><rect x="0.5" y="1.5" width="14" height="12" rx="1" fill="#fff" stroke="#b23ab8"/><rect x="1" y="2" width="13" height="2.2" fill="#cc32d0"/><path d="M2 6.6 H7.8" stroke="#0a0a0a" stroke-width="1.2"/><path d="M2 10.4 H5.6" stroke="#5a5a5a" stroke-width="1.3"/><g transform="translate(4.4,4.8) scale(1.22)"><path d="M0.3 9.2 L1.2 6.3 L7.2 0.3 Q8 -0.3 8.8 0.5 Q9.6 1.3 8.9 2.1 L3 8.1 Z" fill="#f4c24a" stroke="#c8822a" stroke-width="0.8"/><path d="M0.3 9.2 L1.2 6.3 L3 8.1 Z" fill="#f3dcb4" stroke="#b8722a" stroke-width="0.6"/><path d="M0.2 9.3 L0.8 8 L1.5 8.7 Z" fill="#3a2a10"/><path d="M2.2 6.6 L7.6 1.2" stroke="#fbe6a0" stroke-width="0.9"/></g></svg></div><span class="t" style="left:63.3px;top:380px;line-height:18px;letter-spacing:0.143px;">Double-Elimination</span><svg class="i" style="left:27px;top:384px;width:8px;height:9px" viewBox="0 0 8 9"><path d="M0 0 L8 4.5 L0 9 Z" fill="#a6a6a6"/></svg><div class="i" style="left:25px;top:399px;width:16px;height:15px;"><svg viewBox="0 0 16 15" ><rect x="0.5" y="0.5" width="15" height="14" fill="#fff" stroke="#6b7787"/><rect x="2" y="2" width="12" height="11" fill="#1565ea"/><g fill="#fff"><rect x="5" y="3" width="8" height="1"/><rect x="5" y="5" width="8" height="1"/><rect x="5" y="7" width="8" height="1"/><rect x="5" y="9" width="8" height="1"/><rect x="5" y="11" width="8" height="1"/><rect x="3" y="3" width="1" height="1"/><rect x="3" y="5" width="1" height="1"/><rect x="3" y="7" width="1" height="1"/><rect x="3" y="9" width="1" height="1"/><rect x="3" y="11" width="1" height="1"/></g></svg></div><span class="t" style="left:45.3px;top:398px;line-height:18px;transform:scaleX(0.9496);transform-origin:0 0;">Result</span><svg class="i" style="left:9px;top:402px;width:8px;height:9px" viewBox="0 0 8 9"><path d="M0 0 L8 4.5 L0 9 Z" fill="#a6a6a6"/></svg><div class="panel" style="left:324px;top:28px;width:962px;height:215px;"></div><div class="tb" style="left:325px;top:29px;width:960px;height:23px;"></div><div class="i" style="left:326px;top:32px;width:16px;height:16px;"><svg viewBox="0 0 16 16" ><rect x="0.5" y="1.5" width="14" height="12" rx="0.8" fill="#fff" stroke="#5b86c8"/><rect x="1" y="2" width="13" height="1.5" fill="#8ab0e2"/><path d="M5 8.4 L7.6 6 L10.2 8.4 V12 H5 Z" fill="#f6f6f6" stroke="#a4a4a4" stroke-width="0.5"/><path d="M3.2 8.2 L7.6 4.2 L12 8.2" fill="none" stroke="#d6862e" stroke-width="1.9" stroke-linejoin="miter"/><path d="M8.4 4.9 L11.6 7.8" fill="none" stroke="#b06a3a" stroke-width="0.9"/><rect x="6.7" y="9" width="1.8" height="3" fill="#7c7c7c"/><path d="M2 12.4 Q3.4 11 4.8 12.2 V12.8 H2 Z M10.4 12.2 Q11.8 11 13.2 12.4 V12.8 H10.4 Z" fill="#46a636"/><path d="M4.8 12.5 H10.4" stroke="#8c8c8c" stroke-width="0.7"/></svg></div><span class="t" style="left:347.3px;top:32px;line-height:18px;transform:scaleX(0.9349);transform-origin:0 0;">Events</span><div class="i" style="left:1168px;top:32px;width:16px;height:16px;"><svg viewBox="0 0 16 16" ><rect x="0.5" y="0.5" width="15" height="15" fill="#fff" stroke="#4d5a70"/><rect x="1.6" y="1.6" width="12.8" height="12.8" fill="none" stroke="#aab4c4" stroke-width="0.7"/><rect x="2.6" y="5" width="2.2" height="2" fill="#ee2222"/><rect x="6" y="4.6" width="5.4" height="1.8" fill="#25a03a"/><path d="M3 9.4 H8 M3 12 H7" stroke="#b7bfcc" stroke-width="0.9"/><g transform="translate(6,5.6) scale(1.05)"><path d="M0.3 9.2 L1.2 6.3 L6.5 1 L8.5 3 L3 8.1 Z" fill="#2a7de0" stroke="#1c55b0" stroke-width="0.8"/><path d="M6.5 1 L7.3 0.2 Q8 -0.3 8.9 0.5 Q9.7 1.4 9.1 2.2 L8.5 3 Z" fill="#ee2222" stroke="#c01010" stroke-width="0.6"/><path d="M0.3 9.2 L1.2 6.3 L3 8.1 Z" fill="#f7e3b0" stroke="#c08828" stroke-width="0.7"/><path d="M0.2 9.3 L0.8 8 L1.5 8.7 Z" fill="#3a2a10"/><path d="M2.4 6.6 L6.6 2.4" stroke="#9cc8ff" stroke-width="0.9"/></g></svg></div><div class="i" style="left:1193px;top:32px;width:16px;height:16px;"><svg viewBox="0 0 16 16" ><path d="M0.5 14.5 V1 Q0.5 0.5 1 0.5 H7.5 L9 2 H13.5 V8" fill="#9a9a9a" stroke="#5e5e5e"/><path d="M1.5 2.2 H4 M1.5 4 H4 M1.5 5.8 H4 M1.5 7.6 H4" stroke="#c4c4c4" stroke-width="0.8"/><rect x="4.6" y="3.2" width="8.4" height="6" fill="#f6f6f8" stroke="#a0a4ac" stroke-width="0.7"/><path d="M6.4 5.6 H11.2" stroke="#b0b4bc" stroke-width="0.8"/><path d="M2 9 Q2 8.4 2.6 8.4 H15 Q15.6 8.4 15.6 9 V13.6 Q15.6 14.6 14.6 14.6 H1.4 Z" fill="#5f97da" stroke="#2258ac"/><path d="M3 9.8 H14.4" stroke="#a9c8ee" stroke-width="0.8"/></svg></div><div class="i" style="left:1219px;top:33px;width:14px;height:14px;"><svg viewBox="0 0 16 16" ><circle cx="8" cy="8" r="7.3" fill="#f6ead6" stroke="#c8925a" stroke-width="1.1"/><circle cx="8" cy="8" r="5.5" fill="#f2f7ff" stroke="#74a6ea" stroke-width="1.1"/><path d="M6 6.4 L7.8 9 L10.8 6.2" fill="none" stroke="#5e5e5e" stroke-width="1.25" stroke-linejoin="miter"/></svg></div><div class="i" style="left:1243px;top:33px;width:16px;height:14px;"><svg viewBox="0 0 16 14" ><rect x="0" y="0" width="16" height="14" fill="#000"/><rect x="1.2" y="1" width="13.6" height="11.8" fill="#fff"/><rect x="1.2" y="1" width="13.6" height="2" fill="#b040f6"/><rect x="1" y="3" width="14" height="1" fill="#000"/></svg></div><div class="i" style="left:1268px;top:35px;width:9px;height:9px;"><svg viewBox="0 0 9 9" ><path d="M1.2 1.2 L7.8 7.8 M7.8 1.2 L1.2 7.8" stroke="#fc0a0a" stroke-width="1.9" stroke-linecap="round"/><path d="M1.2 1.2 L3.4 3.4" stroke="#f0f0f0" stroke-opacity="0.45" stroke-width="2" stroke-linecap="round"/></svg></div><div style="left:1188px;top:29px;width:1px;height:23px;background:#d4d4d4;"></div><div style="left:1213px;top:29px;width:1px;height:23px;background:#d4d4d4;"></div><div style="left:1238px;top:29px;width:1px;height:23px;background:#d4d4d4;"></div><div class="inset" style="left:327px;top:53px;width:234px;height:22px;"></div><div class="btn" style="left:565px;top:53px;width:22px;height:22px;"></div><div class="i" style="left:568px;top:56px;width:16px;height:16px;"><svg viewBox="0 0 16 16" ><defs><linearGradient id="mg" x1="0" y1="0" x2="0" y2="1"><stop offset="0" stop-color="#e4f8ff"/><stop offset="0.38" stop-color="#a8d8fa"/><stop offset="0.5" stop-color="#2f80e4"/><stop offset="0.72" stop-color="#9cc8f4"/><stop offset="1" stop-color="#d6e4f6"/></linearGradient></defs><path d="M9.6 9.6 L13.8 13.8" stroke="#d08a1e" stroke-width="3" stroke-linecap="round"/><path d="M9.8 9.4 L14 13.4" stroke="#ffd45a" stroke-width="1.1" stroke-linecap="round"/><circle cx="6" cy="6" r="5" fill="url(#mg)" stroke="#7f97b8" stroke-width="0.9"/><path d="M2.2 8.4 Q4.2 11.4 7.4 10.8" fill="none" stroke="#2a3a5a" stroke-width="0.9" opacity="0.7"/><rect x="10.6" y="4.6" width="0.9" height="1.6" fill="#3a4030"/></svg></div><div class="btn" style="left:601px;top:54px;width:19px;height:21px;"></div><div class="i" style="left:603px;top:57px;width:15px;height:15px;"><svg viewBox="0 0 15 15" ><path d="M2 7.2 V4.2 Q2 3 3.2 3 H8 V0.6 L11.6 4 L8 7.6 V5.2 H4.2 V7.2 Z" fill="#b4dcec" stroke="#1c6c88" stroke-width="1" stroke-linejoin="miter"/><path d="M13 7 V10.6 Q13 12 11.6 12 H7 V14.6 L3.2 11 L7 7.4 V9.8 H10.8 V7 Z" fill="#a4e6f0" stroke="#0c4a68" stroke-width="1" stroke-linejoin="miter"/></svg></div><div style="left:634px;top:57px;width:15px;height:15px;border-radius:50%;background:#2a8ae8;border:1px solid #1e78d6;"></div><div style="left:639px;top:62px;width:5px;height:5px;border-radius:50%;background:#fff;"></div><span class="t" style="left:653.3px;top:56px;line-height:18px;letter-spacing:-0.153px;">Show actual events</span><div style="left:763px;top:57px;width:15px;height:15px;border-radius:50%;background:#fff;border:1px solid #a2a2a2;"></div><span class="t" style="left:782.3px;top:56px;line-height:18px;letter-spacing:-0.183px;">Show all events</span><div style="left:1030px;top:62px;width:146px;height:4px;background:#2185dd;border-radius:2px;"></div><span class="t" style="left:1092.3px;top:60px;line-height:10px;font-size:6px;color:#e4f0fc;letter-spacing:0.657px;">100 %</span><span class="t" style="left:1186.3px;top:56px;line-height:18px;letter-spacing:-0.080px;">1 / 1 Record found</span><div class="inset" style="left:327px;top:79px;width:956px;height:160px;"></div><div style="left:1272px;top:80px;width:10px;height:158px;background:#f4f4f4;"></div><div style="left:328px;top:104px;width:944px;height:1px;background:#ececec;"></div><div style="left:479px;top:80px;width:1px;height:24px;background:#e2e2e2;"></div><div style="left:604px;top:80px;width:1px;height:24px;background:#e2e2e2;"></div><div style="left:738px;top:80px;width:1px;height:24px;background:#e2e2e2;"></div><div style="left:863px;top:80px;width:1px;height:24px;background:#e2e2e2;"></div><div style="left:987px;top:80px;width:1px;height:24px;background:#e2e2e2;"></div><div style="left:1139px;top:80px;width:1px;height:24px;background:#e2e2e2;"></div><div style="left:1271px;top:80px;width:1px;height:24px;background:#e2e2e2;"></div><span class="t" style="left:387.3px;top:84px;line-height:18px;transform:scaleX(0.8822);transform-origin:0 0;">EVENT</span><span class="t" style="left:515.3px;top:84px;line-height:18px;transform:scaleX(0.9045);transform-origin:0 0;">DEADLINE</span><span class="t" style="left:640.3px;top:84px;line-height:18px;transform:scaleX(0.8873);transform-origin:0 0;">START DATE</span><span class="t" style="left:774.3px;top:84px;line-height:18px;transform:scaleX(0.9081);transform-origin:0 0;">END DATE</span><span class="t" style="left:899.3px;top:84px;line-height:18px;transform:scaleX(0.9184);transform-origin:0 0;">COUNTRY</span><span class="t" style="left:1040.3px;top:84px;line-height:18px;transform:scaleX(0.8498);transform-origin:0 0;">ADDRESS</span><span class="t" style="left:1193.3px;top:84px;line-height:18px;transform:scaleX(0.8400);transform-origin:0 0;">TYPE</span><div class="i" style="left:1272px;top:87px;width:10px;height:10.5px;"><svg viewBox="0 0 10 10.5" ><path d="M0.6 9 V0.6 H8.4 V4.6 M0.6 2.8 H8.4 M4.5 0.6 V4.8 M0.6 8.6 H3" fill="none" stroke="#000" stroke-width="1.2" stroke-linecap="round" stroke-linejoin="round"/><path d="M3.4 6.3 H9.8 L6.6 10.2 Z" fill="#000" stroke="#000" stroke-width="0.5" stroke-linejoin="round"/></svg></div><div style="left:328px;top:105px;width:944px;height:18px;background:#a1a1ff;"></div><span class="t" style="left:329.3px;top:106px;line-height:18px;letter-spacing:-0.270px;">Knowledge Base</span><span class="t" style="left:481.3px;top:106px;line-height:18px;transform:scaleX(0.8874);transform-origin:0 0;">2023.12.31</span><span class="t" style="left:606.3px;top:106px;line-height:18px;transform:scaleX(0.8874);transform-origin:0 0;">2023.12.31</span><span class="t" style="left:740.3px;top:106px;line-height:18px;transform:scaleX(0.8874);transform-origin:0 0;">2023.12.31</span><span class="t" style="left:865.3px;top:106px;line-height:18px;transform:scaleX(0.8901);transform-origin:0 0;">AUSTRIA</span><span class="t" style="left:989.3px;top:106px;line-height:18px;letter-spacing:-0.270px;">Knowledge Base</span><span class="t" style="left:1141.3px;top:106px;line-height:18px;letter-spacing:0.192px;">Tournament</span><div class="panel" style="left:324px;top:249px;width:962px;height:784px;"></div><div style="left:349px;top:250px;width:936px;height:22px;background:linear-gradient(90deg,#2e76c2 0%,#3d80c6 8%,#4a88ca 16%,#5490cf 25%,#8db3de 50%,#b4cce6 68%,#d4e0ee 84%,#eef0f2 97%,#f2f2f2 100%);"></div><div style="left:349px;top:271px;width:936px;height:1px;background:linear-gradient(90deg,rgba(40,110,190,0.55) 0%,rgba(60,125,200,0.4) 50%,rgba(120,160,210,0.15) 85%,rgba(120,160,210,0) 100%);"></div><div style="left:349px;top:272px;width:936px;height:1px;background:#f8f6f4;"></div><div style="left:325px;top:273px;width:1px;height:759px;background:#9e9e9e;"></div><div style="left:348px;top:273px;width:1px;height:759px;background:#b2b2b2;"></div><div style="left:349px;top:273px;width:1px;height:759px;background:#f8f8f8;"></div><div class="i" style="left:330px;top:253px;width:14.2px;height:16px;"><svg viewBox="0 0 14.2 16" ><path d="M9.5 6.5 H13.5 V15.3 H6.6 V13" fill="#fff" stroke="#2e2e2e" stroke-width="1.2"/><path d="M6.5 3.5 H10.5 V12.5 H3.6 V10" fill="#fff" stroke="#2e2e2e" stroke-width="1.2"/><path d="M0.6 4.2 L3.6 0.8 H7.5 V10.2 H0.6 Z" fill="#fff" stroke="#2e2e2e" stroke-width="1.2"/><path d="M1.4 4.2 L3.6 1.8 V4.2 Z" fill="#b0b4c0"/></svg></div><div class="i" style="left:350px;top:253px;width:16px;height:16px;"><svg viewBox="0 0 16 16" ><rect x="2.5" y="2.5" width="13" height="9" fill="#f6f9fd" stroke="#33445e"/><path d="M2 0 H9.5 V2 H16 V3.6 H2 Z" fill="#0b66e4"/><rect x="3.2" y="0.9" width="5" height="1.3" fill="#4aa8ff"/><rect x="0.5" y="6.5" width="13" height="9" fill="#fcfdff" stroke="#33445e"/><path d="M0 4 H7.5 V6 H14 V7.6 H0 Z" fill="#0b66e4"/><rect x="1.2" y="4.9" width="5" height="1.3" fill="#4aa8ff"/><path d="M3 10 H11" stroke="#c8ccd6" stroke-width="1"/><path d="M3 12 H9" stroke="#aab4c6" stroke-width="1"/><rect x="3" y="13.4" width="2" height="1.4" fill="#5e6e88"/><rect x="9.4" y="13.4" width="2" height="1.4" fill="#5e6e88"/><rect x="4.6" y="14.6" width="1" height="1.4" fill="#fff"/><rect x="8.4" y="14.6" width="1" height="1.4" fill="#fff"/></svg></div><span class="t" style="left:371.3px;top:253px;line-height:18px;color:#fff;letter-spacing:-0.060px;">Competitor Categories</span><div class="i" style="left:1030px;top:253px;width:16px;height:16px;"><svg viewBox="0 0 16 16" ><rect x="2.5" y="2.5" width="13" height="9" fill="#f6f9fd" stroke="#33445e"/><path d="M2 0 H9.5 V2 H16 V3.6 H2 Z" fill="#0b66e4"/><rect x="3.2" y="0.9" width="5" height="1.3" fill="#4aa8ff"/><rect x="0.5" y="6.5" width="13" height="9" fill="#fcfdff" stroke="#33445e"/><path d="M0 4 H7.5 V6 H14 V7.6 H0 Z" fill="#0b66e4"/><rect x="1.2" y="4.9" width="5" height="1.3" fill="#4aa8ff"/><path d="M3 10 H11" stroke="#c8ccd6" stroke-width="1"/><path d="M3 12 H9" stroke="#aab4c6" stroke-width="1"/><rect x="3" y="13.4" width="2" height="1.4" fill="#5e6e88"/><rect x="9.4" y="13.4" width="2" height="1.4" fill="#5e6e88"/><rect x="4.6" y="14.6" width="1" height="1.4" fill="#fff"/><rect x="8.4" y="14.6" width="1" height="1.4" fill="#fff"/></svg></div><div class="i" style="left:1055px;top:253px;width:16px;height:16px;"><svg viewBox="0 0 16 16" ><rect x="0.5" y="2.5" width="11" height="12" rx="0.8" fill="#eaa90c" stroke="#a8690a"/><rect x="1.6" y="3.6" width="1.4" height="9.8" fill="#f8d458"/><path d="M3.5 3.5 V2 Q3.5 1.5 4.2 1.5 Q4.5 0.4 6 0.4 Q7.5 0.4 7.8 1.5 Q8.5 1.5 8.5 2 V3.5 Z" fill="#e8eaee" stroke="#6a7486" stroke-width="0.8"/><path d="M6.5 5.5 H12.5 L15.5 8.5 V15.5 H6.5 Z" fill="#f4f6fa" stroke="#4a566c"/><path d="M12.5 5.5 V8.5 H15.5" fill="#fff" stroke="#4a566c" stroke-width="0.8"/></svg></div><div class="i" style="left:1080px;top:253px;width:16px;height:16px;"><svg viewBox="0 0 16 16" ><rect x="0.5" y="1.5" width="14" height="12" rx="1" fill="#fff" stroke="#5b86c8"/><rect x="1" y="2" width="13" height="1.8" fill="#7ea6dc"/><rect x="8.4" y="5" width="4.8" height="1.6" fill="#e6ecf4"/><path d="M2 6.4 H7.8 M8.2 8.5 H13 M2 10.5 H7.8" stroke="#0a0a0a" stroke-width="1.1"/></svg></div><div class="i" style="left:1102px;top:253px;width:16px;height:16px;"><svg viewBox="0 0 16 16" ><path d="M5.6 2.8 H14.6" stroke="#5a5a4a" stroke-width="1.1"/><path d="M5.6 8.2 H14.6" stroke="#3a3a2a" stroke-width="1.1"/><path d="M5.6 13.6 H14.6" stroke="#0a0a0a" stroke-width="1.2"/><path d="M1.4 1.6 L2.4 0.6 V4 M1 4 H3.8 M1 6.4 Q2.4 5.4 3.4 6.4 L1 9.2 H3.8 M1 11.2 H3.6 L2.2 12.8 Q3.8 13 3.6 14.2 Q3.2 15.4 1 14.8" fill="none" stroke="#5a96e6" stroke-width="0.9"/></svg></div><div class="i" style="left:1127px;top:253px;width:16px;height:16px;"><svg viewBox="0 0 16 16" ><rect x="0.5" y="1.5" width="14" height="12" rx="1" fill="#fff" stroke="#5b86c8"/><rect x="1" y="2" width="13" height="1.8" fill="#7ea6dc"/><path d="M2 6.5 H7.8" stroke="#0a0a0a" stroke-width="1.2"/><path d="M2 10.4 H5.6" stroke="#5a5a5a" stroke-width="1.3"/><g transform="translate(4.4,4.6) scale(1.22)"><path d="M0.3 9.2 L1.2 6.3 L7.2 0.3 Q8 -0.3 8.8 0.5 Q9.6 1.3 8.9 2.1 L3 8.1 Z" fill="#f4c24a" stroke="#c8822a" stroke-width="0.8"/><path d="M0.3 9.2 L1.2 6.3 L3 8.1 Z" fill="#f3dcb4" stroke="#b8722a" stroke-width="0.6"/><path d="M0.2 9.3 L0.8 8 L1.5 8.7 Z" fill="#3a2a10"/><path d="M2.2 6.6 L7.6 1.2" stroke="#fbe6a0" stroke-width="0.9"/></g></svg></div><div class="i" style="left:1149px;top:253px;width:16px;height:16px;"><svg viewBox="0 0 16 16" ><rect x="0.5" y="1.5" width="14" height="12" rx="1" fill="#fff" stroke="#4f7cc4"/><rect x="1" y="2" width="13" height="1.8" fill="#9dbde8"/><path d="M7.5 2 V13.5" stroke="#5b86c8" stroke-width="1"/><path d="M2.2 6.4 H5.8" stroke="#777" stroke-width="1.1"/><path d="M2.2 9.8 H5.8" stroke="#aaa" stroke-width="1"/><path d="M9.4 6.4 H13" stroke="#aaa" stroke-width="1"/><path d="M9.4 10 H13" stroke="#444" stroke-width="1.5"/></svg></div><div class="i" style="left:1171px;top:253px;width:16px;height:16px;"><svg viewBox="0 0 16 16" ><rect x="1.5" y="0.5" width="13" height="7" rx="0.8" fill="#fff" stroke="#6c98d6"/><rect x="2" y="1" width="12" height="1.7" fill="#a9c6ec"/><rect x="1.5" y="8.5" width="13" height="7" rx="0.8" fill="#fff" stroke="#5b86c8"/><rect x="2" y="9" width="12" height="1.5" fill="#a9c6ec"/><path d="M4 5 H12" stroke="#55553a" stroke-width="1.5" stroke-linecap="round"/><path d="M4 12.6 H12" stroke="#555a66" stroke-width="1.5" stroke-linecap="round"/></svg></div><div class="i" style="left:1193px;top:253px;width:16px;height:16px;"><svg viewBox="0 0 16 16" ><rect x="0.5" y="1.5" width="14" height="12" rx="1" fill="#fff" stroke="#b23ab8"/><rect x="1" y="2" width="13" height="2.2" fill="#cc32d0"/><path d="M2 6.6 H7.8" stroke="#0a0a0a" stroke-width="1.2"/><path d="M2 10.4 H5.6" stroke="#5a5a5a" stroke-width="1.3"/><g transform="translate(4.4,4.8) scale(1.22)"><path d="M0.3 9.2 L1.2 6.3 L7.2 0.3 Q8 -0.3 8.8 0.5 Q9.6 1.3 8.9 2.1 L3 8.1 Z" fill="#f4c24a" stroke="#c8822a" stroke-width="0.8"/><path d="M0.3 9.2 L1.2 6.3 L3 8.1 Z" fill="#f3dcb4" stroke="#b8722a" stroke-width="0.6"/><path d="M0.2 9.3 L0.8 8 L1.5 8.7 Z" fill="#3a2a10"/><path d="M2.2 6.6 L7.6 1.2" stroke="#fbe6a0" stroke-width="0.9"/></g></svg></div><div class="i" style="left:1218px;top:254px;width:16px;height:15px;"><svg viewBox="0 0 16 15" ><rect x="0.5" y="0.5" width="15" height="14" fill="#fff" stroke="#6b7787"/><rect x="2" y="2" width="12" height="11" fill="#1565ea"/><g fill="#fff"><rect x="5" y="3" width="8" height="1"/><rect x="5" y="5" width="8" height="1"/><rect x="5" y="7" width="8" height="1"/><rect x="5" y="9" width="8" height="1"/><rect x="5" y="11" width="8" height="1"/><rect x="3" y="3" width="1" height="1"/><rect x="3" y="5" width="1" height="1"/><rect x="3" y="7" width="1" height="1"/><rect x="3" y="9" width="1" height="1"/><rect x="3" y="11" width="1" height="1"/></g></svg></div><div class="i" style="left:1243px;top:254px;width:16px;height:14px;"><svg viewBox="0 0 16 14" ><rect x="0" y="0" width="16" height="14" fill="#000"/><rect x="1.2" y="1" width="13.6" height="11.8" fill="#fff"/><rect x="1.2" y="1" width="13.6" height="2" fill="#b040f6"/><rect x="1" y="3" width="14" height="1" fill="#000"/></svg></div><div class="i" style="left:1268px;top:256px;width:9px;height:9px;"><svg viewBox="0 0 9 9" ><path d="M1.2 1.2 L7.8 7.8 M7.8 1.2 L1.2 7.8" stroke="#fc0a0a" stroke-width="1.9" stroke-linecap="round"/><path d="M1.2 1.2 L3.4 3.4" stroke="#f0f0f0" stroke-opacity="0.45" stroke-width="2" stroke-linecap="round"/></svg></div><div style="left:1050px;top:250px;width:1px;height:22px;background:rgba(150,150,150,0.35);"></div><div style="left:1075px;top:250px;width:1px;height:22px;background:rgba(150,150,150,0.35);"></div><div style="left:1122px;top:250px;width:1px;height:22px;background:rgba(150,150,150,0.35);"></div><div style="left:1213px;top:250px;width:1px;height:22px;background:rgba(150,150,150,0.35);"></div><div style="left:1238px;top:250px;width:1px;height:22px;background:rgba(150,150,150,0.35);"></div><div class="inset" style="left:351px;top:274px;width:234px;height:22px;"></div><div class="btn" style="left:589px;top:274px;width:22px;height:22px;"></div><div class="i" style="left:592px;top:277px;width:16px;height:16px;"><svg viewBox="0 0 16 16" ><defs><linearGradient id="mg" x1="0" y1="0" x2="0" y2="1"><stop offset="0" stop-color="#e4f8ff"/><stop offset="0.38" stop-color="#a8d8fa"/><stop offset="0.5" stop-color="#2f80e4"/><stop offset="0.72" stop-color="#9cc8f4"/><stop offset="1" stop-color="#d6e4f6"/></linearGradient></defs><path d="M9.6 9.6 L13.8 13.8" stroke="#d08a1e" stroke-width="3" stroke-linecap="round"/><path d="M9.8 9.4 L14 13.4" stroke="#ffd45a" stroke-width="1.1" stroke-linecap="round"/><circle cx="6" cy="6" r="5" fill="url(#mg)" stroke="#7f97b8" stroke-width="0.9"/><path d="M2.2 8.4 Q4.2 11.4 7.4 10.8" fill="none" stroke="#2a3a5a" stroke-width="0.9" opacity="0.7"/><rect x="10.6" y="4.6" width="0.9" height="1.6" fill="#3a4030"/></svg></div><div class="btn" style="left:625px;top:275px;width:19px;height:21px;"></div><div class="i" style="left:627px;top:278px;width:15px;height:15px;"><svg viewBox="0 0 15 15" ><path d="M2 7.2 V4.2 Q2 3 3.2 3 H8 V0.6 L11.6 4 L8 7.6 V5.2 H4.2 V7.2 Z" fill="#b4dcec" stroke="#1c6c88" stroke-width="1" stroke-linejoin="miter"/><path d="M13 7 V10.6 Q13 12 11.6 12 H7 V14.6 L3.2 11 L7 7.4 V9.8 H10.8 V7 Z" fill="#a4e6f0" stroke="#0c4a68" stroke-width="1" stroke-linejoin="miter"/></svg></div><div class="btn" style="left:658px;top:274px;width:22px;height:22px;"></div><div class="i" style="left:662px;top:278px;width:14px;height:14px;"><svg viewBox="0 0 16 16" ><rect x="0.4" y="0.4" width="15.2" height="15.2" rx="0.3" fill="#4468b4" stroke="#2a3f7a" stroke-width="0.8"/><rect x="0" y="0" width="16" height="0.9" fill="#6a6a72"/><rect x="0" y="15" width="16" height="1" fill="#0a0a10"/><rect x="2.5" y="1" width="11" height="7.4" fill="#fafcff"/><rect x="2.5" y="1" width="11" height="1.5" fill="#f06060"/><path d="M4 5.6 H12" stroke="#dedede" stroke-width="1.3"/><rect x="3.6" y="10" width="8.6" height="5" fill="#9a9aa0"/><rect x="5.6" y="11" width="1.6" height="3.4" rx="0.5" fill="#2a66d0"/><rect x="8.6" y="10.8" width="2.8" height="3.6" fill="#c8c8cc"/></svg></div><div style="left:1025px;top:283px;width:146px;height:4px;background:#2185dd;border-radius:2px;"></div><span class="t" style="left:1087.3px;top:281px;line-height:10px;font-size:6px;color:#e4f0fc;letter-spacing:0.657px;">100 %</span><span class="t" style="left:1181.3px;top:277px;line-height:18px;letter-spacing:-0.128px;">5 / 5 Records found</span><div class="inset" style="left:351px;top:300px;width:932px;height:706px;"></div><div style="left:1272px;top:301px;width:10px;height:704px;background:#f4f4f4;"></div><div style="left:429px;top:301px;width:1px;height:24px;background:#e2e2e2;"></div><div style="left:462px;top:301px;width:1px;height:24px;background:#e2e2e2;"></div><div style="left:488px;top:301px;width:1px;height:24px;background:#e2e2e2;"></div><div style="left:529px;top:301px;width:1px;height:24px;background:#e2e2e2;"></div><div style="left:619px;top:301px;width:1px;height:24px;background:#e2e2e2;"></div><div style="left:656px;top:301px;width:1px;height:24px;background:#e2e2e2;"></div><div style="left:713px;top:301px;width:1px;height:24px;background:#e2e2e2;"></div><div style="left:769px;top:301px;width:1px;height:24px;background:#e2e2e2;"></div><div style="left:819px;top:301px;width:1px;height:24px;background:#e2e2e2;"></div><div style="left:880px;top:301px;width:1px;height:24px;background:#e2e2e2;"></div><div style="left:944px;top:301px;width:1px;height:24px;background:#e2e2e2;"></div><div style="left:1030px;top:301px;width:1px;height:24px;background:#e2e2e2;"></div><div style="left:1087px;top:301px;width:1px;height:24px;background:#e2e2e2;"></div><div style="left:1162px;top:301px;width:1px;height:24px;background:#e2e2e2;"></div><div style="left:1219px;top:301px;width:1px;height:24px;background:#e2e2e2;"></div><div style="left:1271px;top:301px;width:1px;height:24px;background:#e2e2e2;"></div><div style="left:352px;top:325px;width:920px;height:1px;background:#ececec;"></div><span class="t" style="left:362.3px;top:305px;line-height:18px;transform:scaleX(0.8953);transform-origin:0 0;">CATEGORY</span><span class="t" style="left:436.3px;top:305px;line-height:18px;transform:scaleX(0.8404);transform-origin:0 0;">TE...</span><span class="t" style="left:467.3px;top:305px;line-height:18px;transform:scaleX(0.8400);transform-origin:0 0;">SEX</span><span class="t" style="left:494.3px;top:305px;line-height:18px;transform:scaleX(0.9274);transform-origin:0 0;">ENT...</span><span class="t" style="left:540.3px;top:305px;line-height:18px;transform:scaleX(0.9436);transform-origin:0 0;">DRAW MODE</span><span class="t" style="left:626.3px;top:305px;line-height:18px;transform:scaleX(0.9253);transform-origin:0 0;">PO...</span><span class="t" style="left:661.3px;top:305px;line-height:18px;letter-spacing:-0.060px;">#MATC...</span><span class="t" style="left:726.3px;top:305px;line-height:18px;transform:scaleX(0.9491);transform-origin:0 0;">Status</span><span class="t" style="left:775.3px;top:305px;line-height:18px;transform:scaleX(0.9018);transform-origin:0 0;">AGE F...</span><span class="t" style="left:826.3px;top:305px;line-height:18px;transform:scaleX(0.8976);transform-origin:0 0;">AGE TO...</span><span class="t" style="left:887.3px;top:305px;line-height:18px;transform:scaleX(0.8778);transform-origin:0 0;">ENTRY F...</span><span class="t" style="left:948.3px;top:305px;line-height:18px;transform:scaleX(0.9268);transform-origin:0 0;">DRAW MODE...</span><span class="t" style="left:1037.3px;top:305px;line-height:18px;transform:scaleX(0.9478);transform-origin:0 0;">LIMIT (...</span><span class="t" style="left:1092.3px;top:305px;line-height:18px;letter-spacing:-0.174px;">LIMIT (CAT...</span><span class="t" style="left:1168.3px;top:305px;line-height:18px;transform:scaleX(0.9332);transform-origin:0 0;">Entries ...</span><span class="t" style="left:1226.3px;top:305px;line-height:18px;letter-spacing:-0.192px;">Short ...</span><div class="i" style="left:1272px;top:308px;width:10px;height:10.5px;"><svg viewBox="0 0 10 10.5" ><path d="M0.6 9 V0.6 H8.4 V4.6 M0.6 2.8 H8.4 M4.5 0.6 V4.8 M0.6 8.6 H3" fill="none" stroke="#000" stroke-width="1.2" stroke-linecap="round" stroke-linejoin="round"/><path d="M3.4 6.3 H9.8 L6.6 10.2 Z" fill="#000" stroke="#000" stroke-width="0.5" stroke-linejoin="round"/></svg></div><span class="t" style="left:355.3px;top:327px;line-height:18px;letter-spacing:-0.240px;">Category 1</span><span class="t" style="left:520.3px;top:327px;line-height:18px;">0</span><span class="t" style="left:533.3px;top:327px;line-height:18px;letter-spacing:-0.043px;">Elimination (K...</span><span class="t" style="left:623.3px;top:327px;line-height:18px;letter-spacing:0.235px;">auto</span><span class="t" style="left:660.3px;top:327px;line-height:18px;">0</span><span class="t" style="left:717.3px;top:327px;line-height:18px;letter-spacing:-0.065px;">Particip...</span><span class="t" style="left:805.3px;top:327px;line-height:18px;transform:scaleX(0.9207);transform-origin:0 0;">18</span><span class="t" style="left:866.3px;top:327px;line-height:18px;transform:scaleX(0.9207);transform-origin:0 0;">99</span><span class="t" style="left:928.3px;top:327px;line-height:18px;letter-spacing:-0.129px;">0.0</span><span class="t" style="left:948.3px;top:327px;line-height:18px;">-</span><span class="t" style="left:1078.3px;top:327px;line-height:18px;">0</span><span class="t" style="left:1153.3px;top:327px;line-height:18px;">0</span><span class="t" style="left:355.3px;top:345px;line-height:18px;letter-spacing:-0.240px;">Category 2</span><span class="t" style="left:520.3px;top:345px;line-height:18px;">0</span><span class="t" style="left:533.3px;top:345px;line-height:18px;letter-spacing:-0.043px;">Elimination (K...</span><span class="t" style="left:623.3px;top:345px;line-height:18px;letter-spacing:0.235px;">auto</span><span class="t" style="left:660.3px;top:345px;line-height:18px;">0</span><span class="t" style="left:717.3px;top:345px;line-height:18px;letter-spacing:-0.065px;">Particip...</span><span class="t" style="left:805.3px;top:345px;line-height:18px;transform:scaleX(0.9207);transform-origin:0 0;">18</span><span class="t" style="left:866.3px;top:345px;line-height:18px;transform:scaleX(0.9207);transform-origin:0 0;">99</span><span class="t" style="left:928.3px;top:345px;line-height:18px;letter-spacing:-0.129px;">0.0</span><span class="t" style="left:948.3px;top:345px;line-height:18px;">-</span><span class="t" style="left:1078.3px;top:345px;line-height:18px;">0</span><span class="t" style="left:1153.3px;top:345px;line-height:18px;">0</span><span class="t" style="left:355.3px;top:363px;line-height:18px;letter-spacing:-0.196px;">Category 3 ...</span><span class="t" style="left:466.3px;top:363px;line-height:18px;">f</span><span class="t" style="left:520.3px;top:363px;line-height:18px;">0</span><span class="t" style="left:533.3px;top:363px;line-height:18px;letter-spacing:-0.043px;">Elimination (K...</span><span class="t" style="left:623.3px;top:363px;line-height:18px;letter-spacing:0.235px;">auto</span><span class="t" style="left:660.3px;top:363px;line-height:18px;">0</span><span class="t" style="left:717.3px;top:363px;line-height:18px;letter-spacing:-0.065px;">Particip...</span><span class="t" style="left:805.3px;top:363px;line-height:18px;transform:scaleX(0.9207);transform-origin:0 0;">18</span><span class="t" style="left:866.3px;top:363px;line-height:18px;transform:scaleX(0.9207);transform-origin:0 0;">99</span><span class="t" style="left:928.3px;top:363px;line-height:18px;letter-spacing:-0.129px;">0.0</span><span class="t" style="left:948.3px;top:363px;line-height:18px;">-</span><span class="t" style="left:1078.3px;top:363px;line-height:18px;">0</span><span class="t" style="left:1153.3px;top:363px;line-height:18px;">0</span><span class="t" style="left:355.3px;top:381px;line-height:18px;letter-spacing:-0.196px;">Category 4 ...</span><span class="t" style="left:466.3px;top:381px;line-height:18px;">m</span><span class="t" style="left:520.3px;top:381px;line-height:18px;">0</span><span class="t" style="left:533.3px;top:381px;line-height:18px;letter-spacing:-0.043px;">Elimination (K...</span><span class="t" style="left:623.3px;top:381px;line-height:18px;letter-spacing:0.235px;">auto</span><span class="t" style="left:660.3px;top:381px;line-height:18px;">0</span><span class="t" style="left:717.3px;top:381px;line-height:18px;letter-spacing:-0.065px;">Particip...</span><span class="t" style="left:805.3px;top:381px;line-height:18px;transform:scaleX(0.9207);transform-origin:0 0;">18</span><span class="t" style="left:866.3px;top:381px;line-height:18px;transform:scaleX(0.9207);transform-origin:0 0;">99</span><span class="t" style="left:928.3px;top:381px;line-height:18px;letter-spacing:-0.129px;">0.0</span><span class="t" style="left:948.3px;top:381px;line-height:18px;">-</span><span class="t" style="left:1078.3px;top:381px;line-height:18px;">0</span><span class="t" style="left:1153.3px;top:381px;line-height:18px;">0</span><span class="t" style="left:355.3px;top:399px;line-height:18px;letter-spacing:-0.185px;">Team Categ...</span><span class="t" style="left:432.3px;top:399px;line-height:18px;">t</span><span class="t" style="left:520.3px;top:399px;line-height:18px;">0</span><span class="t" style="left:533.3px;top:399px;line-height:18px;letter-spacing:-0.043px;">Elimination (K...</span><span class="t" style="left:623.3px;top:399px;line-height:18px;letter-spacing:0.235px;">auto</span><span class="t" style="left:660.3px;top:399px;line-height:18px;">0</span><span class="t" style="left:717.3px;top:399px;line-height:18px;letter-spacing:-0.065px;">Particip...</span><span class="t" style="left:805.3px;top:399px;line-height:18px;transform:scaleX(0.9207);transform-origin:0 0;">18</span><span class="t" style="left:866.3px;top:399px;line-height:18px;transform:scaleX(0.9207);transform-origin:0 0;">99</span><span class="t" style="left:928.3px;top:399px;line-height:18px;letter-spacing:-0.129px;">0.0</span><span class="t" style="left:948.3px;top:399px;line-height:18px;">-</span><span class="t" style="left:1078.3px;top:399px;line-height:18px;">0</span><span class="t" style="left:1153.3px;top:399px;line-height:18px;">0</span><div class="i" style="left:329px;top:1012px;width:16px;height:14px;"><svg viewBox="0 0 16 14" ><rect x="0" y="0" width="16" height="14" fill="#000"/><rect x="1.2" y="1" width="13.6" height="11.8" fill="#fff"/><rect x="1.2" y="1" width="13.6" height="2" fill="#b040f6"/><rect x="1" y="3" width="14" height="1" fill="#000"/></svg></div><div style="left:350px;top:1008px;width:152px;height:24px;background:linear-gradient(180deg,#d2d2d2,#c8c8c8);"></div><div class="i" style="left:353px;top:1012px;width:16px;height:16px;"><svg viewBox="0 0 16 16" ><rect x="2.5" y="2.5" width="13" height="9" fill="#f6f9fd" stroke="#33445e"/><path d="M2 0 H9.5 V2 H16 V3.6 H2 Z" fill="#0b66e4"/><rect x="3.2" y="0.9" width="5" height="1.3" fill="#4aa8ff"/><rect x="0.5" y="6.5" width="13" height="9" fill="#fcfdff" stroke="#33445e"/><path d="M0 4 H7.5 V6 H14 V7.6 H0 Z" fill="#0b66e4"/><rect x="1.2" y="4.9" width="5" height="1.3" fill="#4aa8ff"/><path d="M3 10 H11" stroke="#c8ccd6" stroke-width="1"/><path d="M3 12 H9" stroke="#aab4c6" stroke-width="1"/><rect x="3" y="13.4" width="2" height="1.4" fill="#5e6e88"/><rect x="9.4" y="13.4" width="2" height="1.4" fill="#5e6e88"/><rect x="4.6" y="14.6" width="1" height="1.4" fill="#fff"/><rect x="8.4" y="14.6" width="1" height="1.4" fill="#fff"/></svg></div><span class="t" style="left:376.3px;top:1012px;line-height:18px;letter-spacing:0.011px;">Competitor Categories</span><div class="i" style="left:507px;top:1012px;width:16px;height:16px;"><svg viewBox="0 0 16 16" ><rect x="2.5" y="2.5" width="13" height="9" fill="#f6f9fd" stroke="#33445e"/><path d="M2 0 H9.5 V2 H16 V3.6 H2 Z" fill="#0b66e4"/><rect x="3.2" y="0.9" width="5" height="1.3" fill="#4aa8ff"/><rect x="0.5" y="6.5" width="13" height="9" fill="#fcfdff" stroke="#33445e"/><path d="M0 4 H7.5 V6 H14 V7.6 H0 Z" fill="#0b66e4"/><rect x="1.2" y="4.9" width="5" height="1.3" fill="#4aa8ff"/><path d="M3 10 H11" stroke="#c8ccd6" stroke-width="1"/><path d="M3 12 H9" stroke="#aab4c6" stroke-width="1"/><rect x="3" y="13.4" width="2" height="1.4" fill="#5e6e88"/><rect x="9.4" y="13.4" width="2" height="1.4" fill="#5e6e88"/><rect x="4.6" y="14.6" width="1" height="1.4" fill="#fff"/><rect x="8.4" y="14.6" width="1" height="1.4" fill="#fff"/><rect x="10.6" y="11" width="4.6" height="4.6" fill="#fff"/><rect x="11.8" y="11.4" width="2.2" height="4" fill="#1b7af2"/><circle cx="12.9" cy="8.6" r="2.7" fill="#ffc80a" stroke="#d08a00" stroke-width="0.7"/><path d="M10.4 6.5 H15.4" stroke="#1a1208" stroke-width="1.3"/><path d="M11.4 5.6 H14.4" stroke="#3a2a10" stroke-width="0.9"/></svg></div><span class="t" style="left:530.3px;top:1012px;line-height:18px;transform:scaleX(0.9500);transform-origin:0 0;">Officials Categories, Coach, Referee, Press</span><div style="left:756px;top:1008px;width:2px;height:24px;background:linear-gradient(180deg,rgba(190,190,190,0),#c2c2c2 25%,#c2c2c2 75%,rgba(190,190,190,0));"></div><div class="i" style="left:762px;top:1012.5px;width:14px;height:15.5px;"><svg viewBox="0 0 16 16" ><path d="M1.5 3 Q1.5 0.8 8 0.8 Q14.5 0.8 14.5 3 V13 Q14.5 15.2 8 15.2 Q1.5 15.2 1.5 13 Z" fill="#e8eaee" stroke="#7c8594"/><path d="M1.5 3 Q1.5 5.2 8 5.2 Q14.5 5.2 14.5 3 M1.5 6.4 Q1.5 8.6 8 8.6 Q14.5 8.6 14.5 6.4 M1.5 9.8 Q1.5 12 8 12 Q14.5 12 14.5 9.8" fill="none" stroke="#7c8594" stroke-width="0.9"/><path d="M3.4 4.6 V13.6" stroke="#fff" stroke-width="1"/></svg></div><span class="t" style="left:784.3px;top:1012px;line-height:18px;letter-spacing:-0.071px;">Welcome</span><div style="left:840px;top:1008px;width:2px;height:24px;background:linear-gradient(180deg,rgba(190,190,190,0),#c2c2c2 25%,#c2c2c2 75%,rgba(190,190,190,0));"></div><div class="panel" style="left:1292px;top:28px;width:426px;height:1147px;"></div><div class="tb" style="left:1317px;top:29px;width:400px;height:24px;"></div><div style="left:1316px;top:29px;width:1px;height:1145px;background:#b2b2b2;"></div><div style="left:1317px;top:53px;width:1px;height:1121px;background:#f8f8f8;"></div><div style="left:1293px;top:53px;width:1px;height:1121px;background:#9e9e9e;"></div><div class="i" style="left:1298px;top:32px;width:14.2px;height:16px;"><svg viewBox="0 0 14.2 16" ><path d="M9.5 6.5 H13.5 V15.3 H6.6 V13" fill="#fff" stroke="#2e2e2e" stroke-width="1.2"/><path d="M6.5 3.5 H10.5 V12.5 H3.6 V10" fill="#fff" stroke="#2e2e2e" stroke-width="1.2"/><path d="M0.6 4.2 L3.6 0.8 H7.5 V10.2 H0.6 Z" fill="#fff" stroke="#2e2e2e" stroke-width="1.2"/><path d="M1.4 4.2 L3.6 1.8 V4.2 Z" fill="#b0b4c0"/></svg></div><div class="i" style="left:1318px;top:32px;width:16px;height:16px;"><svg viewBox="0 0 16 16" ><path d="M0 0 H16 V11.6 H9 L4.2 16 V11.6 H0 Z" fill="#56595f"/><path d="M2 2.5 H14 M2 4.5 H14 M2 6.5 H14 M2 8.5 H14" stroke="#fff" stroke-width="1"/></svg></div><span class="t" style="left:1339.3px;top:32px;line-height:18px;letter-spacing:-0.015px;">Match Order / Lists / Caller</span><div class="i" style="left:1675px;top:33px;width:16px;height:14px;"><svg viewBox="0 0 16 14" ><rect x="0" y="0" width="16" height="14" fill="#000"/><rect x="1.2" y="1" width="13.6" height="11.8" fill="#fff"/><rect x="1.2" y="1" width="13.6" height="2" fill="#b040f6"/><rect x="1" y="3" width="14" height="1" fill="#000"/></svg></div><div class="i" style="left:1700px;top:35px;width:9px;height:9px;"><svg viewBox="0 0 9 9" ><path d="M1.2 1.2 L7.8 7.8 M7.8 1.2 L1.2 7.8" stroke="#fc0a0a" stroke-width="1.9" stroke-linecap="round"/><path d="M1.2 1.2 L3.4 3.4" stroke="#f0f0f0" stroke-opacity="0.45" stroke-width="2" stroke-linecap="round"/></svg></div><div class="inset" style="left:1319px;top:53px;width:396px;height:1095px;"></div><div style="left:1330px;top:64px;width:374px;height:348px;border:1px solid #a9a9a9;border-top:none;background:#f2f2f2;"></div><div style="left:1330px;top:64px;width:374px;height:25px;background:linear-gradient(90deg,#dfe1e7 0%,#e6e7eb 50%,#f2f2f2 100%);"></div><div style="left:1330px;top:64px;width:3px;height:1px;background:#5a96e4;"></div><div style="left:1330px;top:65px;width:1px;height:2px;background:#8ab4ec;"></div><div style="left:1702px;top:64px;width:2px;height:1px;background:#5a96e4;"></div><span class="t" style="left:1341.3px;top:68px;line-height:18px;font-weight:700;transform:scaleX(0.9501);transform-origin:0 0;">Match Caller</span><div class="i" style="left:1678.2px;top:67px;width:17px;height:17px;"><svg viewBox="0 0 17 17" ><circle cx="8.5" cy="8.5" r="7.7" fill="#dcdde4" stroke="#a4a4a6" stroke-width="0.9"/><path d="M5.2 8.2 L8.5 5 L11.8 8.2 M5.2 12.2 L8.5 9 L11.8 12.2" fill="none" stroke="#242424" stroke-width="1.5"/></svg></div><div style="left:1343px;top:101px;width:348px;height:106px;border:1px solid #b4b4b4;border-radius:3px;background:#fff;"></div><svg class="i" style="left:1466px;top:103.4px;width:102px;height:101px" viewBox="0 0 102 101"><defs><clipPath id="cc"><circle cx="51" cy="50.5" r="50"/></clipPath></defs><circle cx="51" cy="50.5" r="50" fill="#30b7fb"/><path d="M30 78 L72 24 L110 62 L110 110 L60 110 Z" fill="#2c9bd8" clip-path="url(#cc)"/><rect x="29" y="22.6" width="44" height="55.6" rx="2" fill="#34495e"/><rect x="32" y="26.4" width="38" height="48.8" fill="#ebeef0"/><rect x="51" y="26.4" width="19" height="48.8" fill="#d5dce2"/><rect x="40" y="19.6" width="11" height="8" fill="#f9b54c"/><rect x="51" y="19.6" width="11" height="8" fill="#e6a210"/><g fill="#c0392b"><rect x="35" y="35.5" width="3" height="3"/><rect x="35" y="45" width="3" height="3"/><rect x="35" y="54.5" width="3" height="3"/><rect x="35" y="64" width="3" height="3"/></g><path d="M42 37 H64 M42 46.5 H64 M42 56 H64 M42 65.5 H64" stroke="#b9b4ac" stroke-width="0.8"/></svg><div class="i" style="left:1342px;top:229px;width:16px;height:16px;"><svg viewBox="0 0 16 16" ><defs><linearGradient id="mg" x1="0" y1="0" x2="0" y2="1"><stop offset="0" stop-color="#e4f8ff"/><stop offset="0.38" stop-color="#a8d8fa"/><stop offset="0.5" stop-color="#2f80e4"/><stop offset="0.72" stop-color="#9cc8f4"/><stop offset="1" stop-color="#d6e4f6"/></linearGradient></defs><path d="M9.6 9.6 L13.8 13.8" stroke="#d08a1e" stroke-width="3" stroke-linecap="round"/><path d="M9.8 9.4 L14 13.4" stroke="#ffd45a" stroke-width="1.1" stroke-linecap="round"/><circle cx="6" cy="6" r="5" fill="url(#mg)" stroke="#7f97b8" stroke-width="0.9"/><path d="M2.2 8.4 Q4.2 11.4 7.4 10.8" fill="none" stroke="#2a3a5a" stroke-width="0.9" opacity="0.7"/><rect x="10.6" y="4.6" width="0.9" height="1.6" fill="#3a4030"/></svg></div><span class="t" style="left:1362.3px;top:229px;line-height:18px;letter-spacing:-0.100px;">Start/Refresh Automatic Result Checker</span><div class="i" style="left:1344px;top:250px;width:14px;height:14px;"><svg viewBox="0 0 14 14" ><rect x="0.3" y="0.3" width="13.4" height="13.4" rx="1.8" fill="#539be6" stroke="#4a92e0" stroke-width="0.6"/><path d="M2.8 7.6 L5.4 10.4 L10.8 3.2" fill="none" stroke="#fff" stroke-width="1.9"/></svg></div><span class="t" style="left:1362.3px;top:249px;line-height:18px;letter-spacing:0.072px;">Automatically hide finished matches</span><div class="i" style="left:1343px;top:270px;width:14px;height:14px;"><svg viewBox="0 0 14 14" ><path d="M4.2 0.4 H9.8 L13.6 4.2 V9.8 L9.8 13.6 H4.2 L0.4 9.8 V4.2 Z" fill="#f21c1c" stroke="#f40e0e" stroke-width="0.8" stroke-linejoin="round"/><path d="M4.2 4.2 L9.8 9.8 M9.8 4.2 L4.2 9.8" stroke="#fff" stroke-width="2.3" stroke-linecap="square"/></svg></div><span class="t" style="left:1362.3px;top:269px;line-height:18px;letter-spacing:-0.061px;">Stop Automatic Result Checker</span><div class="i" style="left:1344px;top:308px;width:14px;height:14px;"><svg viewBox="0 0 14 14" ><rect x="0.3" y="0.3" width="13.4" height="13.4" rx="1.8" fill="#539be6" stroke="#4a92e0" stroke-width="0.6"/><path d="M2.8 7.6 L5.4 10.4 L10.8 3.2" fill="none" stroke="#fff" stroke-width="1.9"/></svg></div><span class="t" style="left:1362.3px;top:307px;line-height:18px;letter-spacing:-0.065px;">Show Match Numbers on Draws</span><div class="i" style="left:1342px;top:327px;width:16px;height:16px;"><svg viewBox="0 0 16 16" ><path d="M3.6 6 V0.6 H9.6 L12.4 3.2 V6" fill="#cfe4fa" stroke="#5a8cd0" stroke-width="0.9"/><path d="M6 1.6 L9 3.4 L8 4.8 L5.4 3.6 Z" fill="#eef6fe"/><path d="M0.6 7 Q0.6 5.6 2 5.6 H14 Q15.4 5.6 15.4 7 V13.2 H0.6 Z" fill="#dcdee2" stroke="#4a4c52" stroke-width="0.9"/><path d="M1.4 6.6 H14.6" stroke="#f8f8f8" stroke-width="0.9"/><path d="M3.6 8.6 H12.4" stroke="#6a6e76" stroke-width="1"/><path d="M1.4 10.6 H14.6" stroke="#8a8e96" stroke-width="1.6"/><path d="M3.4 12 H12.6 V15.4 H3.4 Z" fill="#f6f8fc" stroke="#4a8ad8" stroke-width="0.9"/></svg></div><span class="t" style="left:1362.3px;top:327px;line-height:18px;letter-spacing:-0.191px;">Show / Print / Save as...</span><span class="t" style="left:1346.3px;top:355px;line-height:18px;letter-spacing:0.080px;">Match Caller Countdown (minutes)</span><div style="left:1540px;top:352px;width:72px;height:22px;border:1px solid #bdbdbd;border-radius:3px;background:#fff;"></div><span class="t" style="left:1547.3px;top:355px;line-height:18px;transform:scaleX(0.9207);transform-origin:0 0;">15</span><svg class="i" style="left:1596px;top:361px;width:10px;height:5px" viewBox="0 0 10 5"><path d="M0 0 H10 L5 5 Z" fill="#5a5a5a"/></svg><div class="i" style="left:1343px;top:384.5px;width:14px;height:15px;"><svg viewBox="0 0 15 16" ><path d="M0.6 1 H8.6 Q14.4 1 14.4 7 Q14.4 13 8.6 13 H4 V15.4 L0.2 11.3 L4 7.2 V9.6 H8.4 Q10.6 9.6 10.6 7.2 Q10.6 4.8 8.4 4.8 H0.6 Z" fill="#72c260" stroke="#54ac42" stroke-width="0.8" stroke-linejoin="round"/><path d="M1.6 2.8 H8.6" stroke="#b4e6a2" stroke-width="1.6"/><path d="M9.6 2.4 Q12.8 3.4 12.8 7 Q12.8 10.4 10 11.4" fill="none" stroke="#94cc88" stroke-width="1.2"/><path d="M2.6 11.2 H8.6" stroke="#98d08c" stroke-width="1.4"/><path d="M4.2 12.7 H9" stroke="#2a9a1c" stroke-width="0.8"/><path d="M4.6 4.5 H8" stroke="#4a9a3a" stroke-width="0.7"/></svg></div><span class="t" style="left:1362.3px;top:383px;line-height:18px;letter-spacing:-0.089px;">Start sequence with 1 at these matchnumbers</span><div class="i" style="left:1297px;top:1154px;width:16px;height:14px;"><svg viewBox="0 0 16 14" ><rect x="0" y="0" width="16" height="14" fill="#000"/><rect x="1.2" y="1" width="13.6" height="11.8" fill="#fff"/><rect x="1.2" y="1" width="13.6" height="2" fill="#b040f6"/><rect x="1" y="3" width="14" height="1" fill="#000"/></svg></div><div class="i" style="left:1321px;top:1154px;width:16px;height:16px;"><svg viewBox="0 0 16 16" ><path d="M2 3 Q2 1 7.5 1 Q13 1 13 3 V12.5 Q13 14.5 7.5 14.5 Q2 14.5 2 12.5 Z" fill="#eef0f2" stroke="#b4b8be"/><path d="M2 3 Q2 5 7.5 5 Q13 5 13 3" fill="none" stroke="#c4c8ce"/><path d="M6 8.4 H10.4 V6 L15.6 10.6 L10.4 15.2 V12.8 H6 Z" fill="#4caf3a" stroke="#1e7a14" stroke-width="0.9"/><path d="M7 9.6 H11.2 V8.4" fill="none" stroke="#b4e6a4" stroke-width="0.8"/></svg></div><span class="t" style="left:1344.3px;top:1154px;line-height:18px;transform:scaleX(0.9532);transform-origin:0 0;">Backup Database</span><div style="left:1440px;top:1150px;width:2px;height:24px;background:linear-gradient(180deg,rgba(190,190,190,0),#c2c2c2 25%,#c2c2c2 75%,rgba(190,190,190,0));"></div><div style="left:1442px;top:1150px;width:174px;height:24px;background:linear-gradient(180deg,#d4d4d4,#c6c6c6);"></div><div class="i" style="left:1445px;top:1154px;width:16px;height:16px;"><svg viewBox="0 0 16 16" ><path d="M0 0 H16 V11.6 H9 L4.2 16 V11.6 H0 Z" fill="#56595f"/><path d="M2 2.5 H14 M2 4.5 H14 M2 6.5 H14 M2 8.5 H14" stroke="#fff" stroke-width="1"/></svg></div><span class="t" style="left:1468.3px;top:1154px;line-height:18px;letter-spacing:-0.015px;">Match Order / Lists / Caller</span><div class="i" style="left:1622px;top:1155px;width:15px;height:15px;"><svg viewBox="0 0 16 16" ><circle cx="8" cy="8" r="7.3" fill="#f6ead6" stroke="#c8925a" stroke-width="1.1"/><circle cx="8" cy="8" r="5.5" fill="#f2f7ff" stroke="#74a6ea" stroke-width="1.1"/><path d="M6 6.4 L7.8 9 L10.8 6.2" fill="none" stroke="#5e5e5e" stroke-width="1.25" stroke-linejoin="miter"/></svg></div><span class="t" style="left:1644.3px;top:1154px;line-height:18px;transform:scaleX(0.8827);transform-origin:0 0;">SET DTM</span><div style="left:1696px;top:1150px;width:2px;height:24px;background:linear-gradient(180deg,rgba(190,190,190,0),#c2c2c2 25%,#c2c2c2 75%,rgba(190,190,190,0));"></div><div class="panel" style="left:0px;top:1039px;width:1286px;height:136px;"></div><div class="tb" style="left:1px;top:1040px;width:1284px;height:24px;"></div><div class="i" style="left:3px;top:1044px;width:16px;height:14px;"><svg viewBox="0 0 16 14" ><rect x="0.5" y="0.5" width="15" height="13" rx="0.8" fill="#1c1c1c" stroke="#3a4a6a"/><rect x="1" y="1" width="14" height="1.8" fill="#5b8ed8"/><rect x="13" y="1.2" width="1.4" height="1.2" fill="#e04040"/><path d="M2.6 5 L4.6 6.4 L2.6 7.8" fill="none" stroke="#e8e8e8" stroke-width="0.9"/><path d="M5.4 8.4 H8" stroke="#9a9a9a" stroke-width="0.8"/><rect x="1.4" y="9.4" width="13.2" height="3.6" fill="#333"/></svg></div><span class="t" style="left:23.3px;top:1043px;line-height:18px;letter-spacing:-0.251px;">Message Console</span><div class="i" style="left:1265px;top:1044px;width:16px;height:14px;"><svg viewBox="0 0 16 14" ><rect x="0" y="0" width="16" height="14" fill="#000"/><rect x="1.2" y="1" width="13.6" height="11.8" fill="#fff"/><rect x="1.2" y="1" width="13.6" height="2" fill="#b040f6"/><rect x="1" y="3" width="14" height="1" fill="#000"/></svg></div><div style="left:3px;top:1064px;width:1280px;height:108px;border:1px solid #b9b9b9;background:#f2f2f2;"></div><div style="left:0px;top:1176px;width:1720px;height:24px;background:linear-gradient(180deg,#c9c9cb 0px,#8f9198 1px,#8f9198 2px,#c2c4ca 2.5px,#d6d8dd 4px,#dfe0e5 7px,#e1e2e7 14px,#dfe0e5 24px);"></div><div style="left:0px;top:1198px;width:1720px;height:2px;background:#cfd0d4;"></div><span class="t" style="left:5.3px;top:1180px;line-height:16px;font-size:11px;font-weight:700;transform:scaleX(0.9479);transform-origin:0 0;">2023-11-07 10:41:36:729 [INFO] Messages found 0</span><svg class="i" style="left:1706px;top:1186px;width:12px;height:12px" viewBox="0 0 12 12"><g fill="#b0b0b0"><rect x="9" y="1" width="2" height="2"/><rect x="5" y="5" width="2" height="2"/><rect x="9" y="5" width="2" height="2"/><rect x="1" y="9" width="2" height="2"/><rect x="5" y="9" width="2" height="2"/><rect x="9" y="9" width="2" height="2"/></g></svg><div style="left:467px;top:450px;width:586px;height:293px;border:1px solid #a8a8a8;border-radius:8px;background:#f2f2f2;box-shadow:0 25px 44px rgba(0,0,0,0.31),0 2px 14px rgba(0,0,0,0.15);"></div><div class="i" style="left:476px;top:457px;width:16px;height:16px;"><svg viewBox="0 0 16 16" ><rect width="16" height="8" fill="#f80a0a"/><rect y="8" width="16" height="8" fill="#0a58d8"/><rect y="15" width="16" height="1" fill="#0838b0"/><path d="M7 5.5 H14.8" stroke="#a08478" stroke-width="0.8" stroke-dasharray="1.1 0.5"/><path d="M7.8 6.4 H13.7" stroke="#d83020" stroke-width="0.9"/><path d="M5.8 7.1 H11.6 Q13.2 7.6 12.8 8.8 L11.4 9.4 L6.6 8.7 Q4.8 8.2 5.8 7.1 Z" fill="#a8a0a0"/><ellipse cx="5.8" cy="6.9" rx="1.15" ry="1.2" fill="#f2f4f4"/><ellipse cx="12.1" cy="8.9" rx="1.1" ry="1.2" fill="#f6f2ee"/><path d="M2 9.3 H10.6" stroke="#2a6ad2" stroke-width="0.9"/><path d="M1.4 10.5 H12.2" stroke="#948c80" stroke-width="0.9"/><path d="M3 13.5 H12.4" stroke="#0a44b0" stroke-width="0.8" stroke-dasharray="0.9 1.1"/></svg></div><span class="t" style="left:500.3px;top:457px;line-height:18px;letter-spacing:-0.068px;">Category Manager</span><svg class="i" style="left:930px;top:454px;width:112px;height:22px" viewBox="0 0 112 22"><path d="M7 10.5 H17" stroke="#1a1a1a" stroke-width="1" fill="none"/><rect x="51.5" y="5.5" width="9" height="10" rx="1.5" fill="none" stroke="#1a1a1a" stroke-width="1.1"/><path d="M95 5.5 L105 15.5 M105 5.5 L95 15.5" stroke="#1a1a1a" stroke-width="1.1" fill="none"/></svg><span class="t" style="left:478.3px;top:490px;line-height:18px;letter-spacing:0.204px;">No.</span><span class="t" style="left:478.3px;top:526px;line-height:18px;letter-spacing:0.122px;">Name*</span><span class="t" style="left:478.3px;top:562px;line-height:18px;letter-spacing:0.160px;">Age from:*</span><span class="t" style="left:478.3px;top:598px;line-height:18px;letter-spacing:0.122px;">Age too old:*</span><span class="t" style="left:478.3px;top:634px;line-height:18px;transform:scaleX(0.8869);transform-origin:0 0;">Sex:</span><span class="t" style="left:478.3px;top:670px;line-height:18px;letter-spacing:-0.053px;">Team category:</span><div style="left:762px;top:482px;width:278px;height:32px;background:#c0c0c0;"></div><div style="left:762px;top:518px;width:278px;height:32px;border:1px solid #b2b2b2;background:#fff;"></div><span class="t" style="left:769.3px;top:526px;line-height:18px;letter-spacing:-0.140px;">Category 5</span><div style="left:762px;top:554px;width:278px;height:32px;border:1px solid #b2b2b2;background:#fff;"></div><span class="t" style="left:769.3px;top:562px;line-height:18px;transform:scaleX(0.9207);transform-origin:0 0;">16</span><div style="left:762px;top:590px;width:278px;height:32px;border:1px solid #b2b2b2;background:#fff;"></div><span class="t" style="left:769.3px;top:598px;line-height:18px;transform:scaleX(0.9207);transform-origin:0 0;">99</span><div style="left:761px;top:625px;width:281px;height:34px;border:2px solid #84b4e6;border-radius:4px;background:#fff;"></div><span class="t" style="left:769.3px;top:634px;line-height:18px;letter-spacing:0.071px;">male</span><svg class="i" style="left:1024px;top:640px;width:10px;height:5px" viewBox="0 0 10 5"><path d="M0 0 H10 L5 5 Z" fill="#5a5a5a"/></svg><div style="left:763px;top:671px;width:14px;height:14px;border:1px solid #9a9a9a;border-radius:2px;background:#fff;"></div><div style="left:643px;top:708px;width:72px;height:22px;border:1px solid #c4c4c4;border-radius:3px;background:#f4f4f4;"></div><span class="t" style="left:662.3px;top:711px;line-height:18px;color:#9c9c9c;letter-spacing:-0.067px;">update</span><div style="left:722px;top:706px;width:76px;height:26px;border:2px solid #84b4e6;border-radius:4px;background:#e6e6e6;box-shadow:inset 0 0 0 1px #b8b8b8;"></div><span class="t" style="left:749.3px;top:711px;line-height:18px;transform:scaleX(0.9188);transform-origin:0 0;">save</span><div style="left:805px;top:708px;width:72px;height:22px;border:1px solid #c4c4c4;border-radius:3px;background:#f4f4f4;"></div><span class="t" style="left:825.3px;top:711px;line-height:18px;color:#9c9c9c;letter-spacing:-0.067px;">delete</span><svg class="i" style="left:760px;top:710px;width:310px;height:260px" viewBox="760 710 310 260"><path fill-rule="evenodd" d="M772.5 720.5 L1053 798 L918 845 L896 957 Z M786 733 L895 953 L911 836 L1024 799 Z" fill="#fff" fill-opacity="0.9"/><path d="M786 733 L1024 799 L911 836 L895 953 Z" fill="#ec6868" fill-opacity="0.8"/></svg>
</body></html>
